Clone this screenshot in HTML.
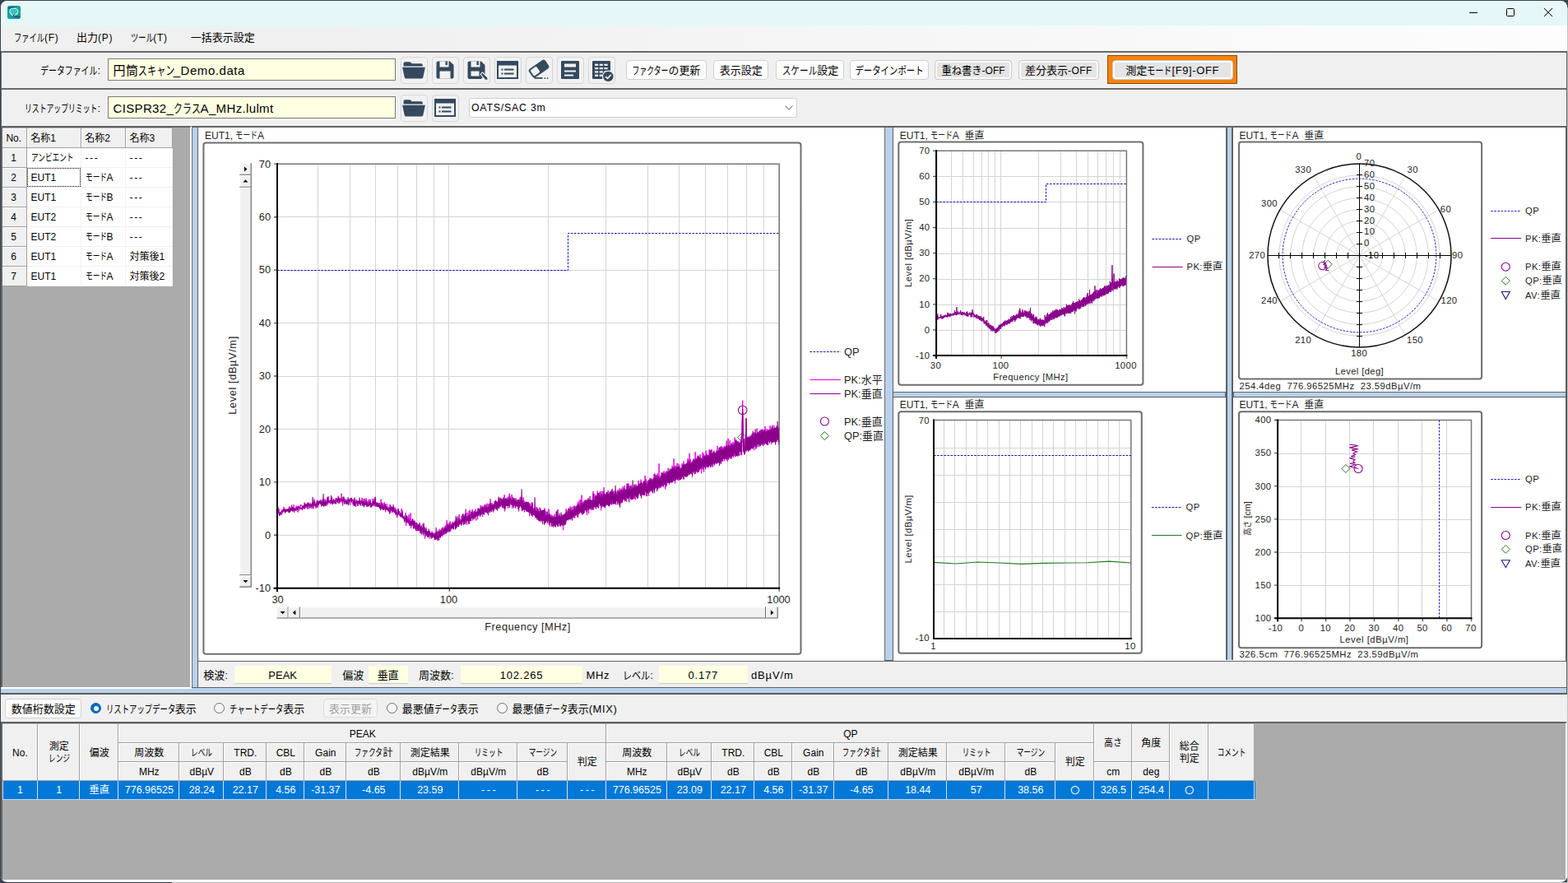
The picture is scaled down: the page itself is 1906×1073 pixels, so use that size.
<!DOCTYPE html><html lang="ja"><head><meta charset="utf-8"><title>EMI</title><style>
html,body{margin:0;padding:0}
body{width:1906px;height:1073px;overflow:hidden;position:relative;background:#3a4450;font-family:"Liberation Sans","Noto Sans CJK JP",sans-serif;font-size:12px;color:#000}
#win{position:absolute;left:0;top:0;width:1906px;height:1073px;clip-path:inset(1px 1px 1px 1px round 8px);background:#f0f0f0}
#win div{position:absolute;box-sizing:border-box}
.t{white-space:nowrap;transform:translateY(-50%);line-height:1}
.tc{white-space:nowrap;transform:translate(-50%,-50%);line-height:1}
.tr{white-space:nowrap;transform:translate(-100%,-50%);line-height:1}
.j{display:inline-block;white-space:nowrap;transform-origin:0 50%}
svg{position:absolute;left:0;top:0;overflow:visible}
.ib{border:1px solid #d6d6d6;border-radius:4px;background:#f1f1f1}
.wb{border:1px solid #d0d0d0;border-radius:4px;background:#fdfdfd}
.gb{border:1px solid #c9c9c9;border-radius:4px;background:#e4e4e4;box-shadow:inset 0 0 0 2px #fbfbfb}
.yl{background:#ffffe1}
.hc{background:#f0f0f0;border-right:1px solid #a0a0a0;border-bottom:1px solid #a0a0a0;box-shadow:inset 1px 1px 0 #fff}
.cf{font-size:12.5px}
</style></head><body><div id="win">
<div style="left:0px;top:0px;width:1906px;height:31px;background:#e6f7f8"></div>
<svg width="1906" height="32" viewBox="0 0 1906 32"><rect x="9" y="7" width="16" height="16" rx="2.5" fill="#12a295"/><path d="M16.9 19.6c-3.2-1.6-4.9-3.4-4.9-5.3 0-2.4 2.1-4.1 4.9-4.1s4.9 1.700 4.900 4.100c0 1.900-1.700 3.700-4.900 5.300z" fill="none" stroke="#b5fff5" stroke-width="1.25"/><path d="M15 11.800q-1.500 2.800 0 5.600M18.800 11.800q1.500 2.800 0 5.600M16.900 11.500v6.500" fill="none" stroke="#9df2e8" stroke-width="0.9"/><path d="M10 9.700l8.300-1.500" stroke="#2b3f95" stroke-width="2" stroke-dasharray="1.300 0.700"/><path d="M15.600 19.300l8.600 1.700" stroke="#2b3f95" stroke-width="2.600" stroke-dasharray="1.400 0.600"/><path d="M1786 15.500h10" stroke="#000" stroke-width="1"/><rect x="1831.5" y="10.500" width="9" height="9" rx="1" fill="none" stroke="#000" stroke-width="1"/><path d="M1877 10l10 10M1887 10l-10 10" stroke="#000" stroke-width="1"/></svg>
<div style="left:0px;top:31px;width:1906px;height:31px;background:linear-gradient(90deg,#f0f0f0 0%,#f0f0f0 20%,#fdfdfd 100%)"></div>
<div class="t" style="left:17px;top:44.9px;font-size:13px"><span class="j" id="j1" style="width:2.840em;transform:scaleX(0.71)">ファイル</span><span style="font-size:12px;letter-spacing:0.8px">(F)</span></div>
<div class="t" style="left:93px;top:44.9px;font-size:13px"><span class="j" id="j7" style="width:2.000em">出力</span><span style="font-size:12px;letter-spacing:0.8px">(P)</span></div>
<div class="t" style="left:158.5px;top:44.9px;font-size:13px"><span class="j" id="j2" style="width:2.130em;transform:scaleX(0.71)">ツール</span><span style="font-size:12px;letter-spacing:0.8px">(T)</span></div>
<div class="t" style="left:231.7px;top:44.9px;font-size:13px"><span class="j" id="j8" style="width:6.000em">一括表示設定</span></div>
<div style="left:1px;top:62px;width:1904px;height:46px;background:#f0f0f0;border-top:2px solid #696969;border-left:1px solid #696969;border-right:1px solid #fff"></div>
<div style="left:1px;top:107px;width:1904px;height:46px;background:#f0f0f0;border-top:2px solid #696969;border-left:1px solid #696969;border-right:1px solid #fff"></div>
<div class="tr" style="left:122px;top:85px;font-size:13px"><span class="j" id="j3" style="width:5.320em;transform:scaleX(0.76)">データファイル</span>:</div>
<div class="tr" style="left:122px;top:131px;font-size:13px"><span class="j" id="j4" style="width:6.800em;transform:scaleX(0.68)">リストアップリミット</span>:</div>
<div style="left:131px;top:71px;width:350px;height:27px;background:#ffffe1;border:1px solid #7a7a7a"></div>
<div style="left:131px;top:117px;width:350px;height:27px;background:#ffffe1;border:1px solid #7a7a7a"></div>
<div class="t" style="left:137.5px;top:84.8px;font-size:15px;letter-spacing:.55px"><span class="j" id="j9" style="width:2.000em">円筒</span><span class="j" id="j5" style="width:2.880em;transform:scaleX(0.72)">スキャン</span>_Demo.data</div>
<div class="t" style="left:137.5px;top:130.8px;font-size:15px;letter-spacing:.35px">CISPR32_<span class="j" id="j6" style="width:2.160em;transform:scaleX(0.72)">クラス</span>A_MHz.lulmt</div>
<div class="ib" style="left:486.5px;top:68.5px;width:33px;height:33px;"></div>
<div class="ib" style="left:524.5px;top:68.5px;width:33px;height:33px;"></div>
<div class="ib" style="left:562.5px;top:68.5px;width:33px;height:33px;"></div>
<div class="ib" style="left:600.5px;top:68.5px;width:33px;height:33px;"></div>
<div class="ib" style="left:638.5px;top:68.5px;width:33px;height:33px;"></div>
<div class="ib" style="left:676.5px;top:68.5px;width:33px;height:33px;"></div>
<div class="ib" style="left:714.5px;top:68.5px;width:33px;height:33px;"></div>
<div class="ib" style="left:486.5px;top:114.5px;width:33px;height:33px;"></div>
<div class="ib" style="left:524.5px;top:114.5px;width:33px;height:33px;"></div>
<svg width="1906" height="160" viewBox="0 0 1906 160"><path d="M490.5 77.0q0-1.8 1.8-1.8h6.2l2.2 2h11.3q1.8 0 1.8 1.8v1.5h-23.3z" fill="#34495e"/><path d="M489.1 81.7h27.8l-2.6 12.2q-.4 1.7-2.2 1.7h-18.2q-1.8 0-2.2-1.7z" fill="#34495e"/><path d="M530.5 76.3q0-1.8 1.8-1.8h14.6l4.6 4.6v14.6q0 1.8-1.8 1.8h-17.4q-1.8 0-1.8-1.8z" fill="#34495e"/><rect x="534.5" y="86.5" width="13" height="9" fill="#f1f1f1"/><rect x="534.5" y="74.5" width="11" height="7" fill="#f1f1f1"/><rect x="541.5" y="74.5" width="2.4" height="4.6" fill="#34495e"/><path d="M568.5 76.3q0-1.8 1.8-1.8h14.6l4.6 4.6v11l-4.5 5.8h-14.700q-1.800 0-1.800-1.800z" fill="#34495e"/><rect x="572.5" y="86.5" width="10" height="6" fill="#f1f1f1"/><rect x="572.5" y="74.5" width="11" height="7" fill="#f1f1f1"/><rect x="579.5" y="74.5" width="2.4" height="4.6" fill="#34495e"/><path d="M584.1 90.3l2.4-2.4 6.4 6.4v3h-3z" fill="#34495e" stroke="#f1f1f1" stroke-width="1.1"/><rect x="605.0" y="75.0" width="24" height="20" fill="none" stroke="#34495e" stroke-width="2"/><rect x="604.5" y="74.5" width="25" height="5" fill="#34495e"/><rect x="609.5" y="83.5" width="2" height="2" fill="#34495e"/><rect x="613.0" y="83.5" width="11.5" height="2" fill="#34495e"/><rect x="609.5" y="88.5" width="2" height="2" fill="#34495e"/><rect x="613.0" y="88.5" width="11.5" height="2" fill="#34495e"/><g transform="rotate(-35 654.5 83.5)"><rect x="643.0" y="77.5" width="24" height="12.5" rx="3" fill="#34495e"/><rect x="645.0" y="79.5" width="9" height="8.5" rx="1.5" fill="#f1f1f1"/></g><path d="M649.5 94.8h10" stroke="#34495e" stroke-width="1.8"/><path d="M661.5 95.0h1.6M664.7 95.0h1.6" stroke="#34495e" stroke-width="1.6"/><rect x="682.0" y="74.0" width="22" height="22" rx="1" fill="#34495e"/><rect x="686.0" y="77.5" width="14" height="4" fill="#f1f1f1"/><rect x="686.0" y="85.5" width="14" height="2" fill="#f1f1f1"/><rect x="686.0" y="90.5" width="11" height="2" fill="#f1f1f1"/><rect x="720.0" y="74.0" width="22" height="22" rx="1" fill="#34495e"/><rect x="723.0" y="77.7" width="4.2" height="2.2" fill="#f1f1f1"/><rect x="728.7" y="77.7" width="4.2" height="2.2" fill="#f1f1f1"/><rect x="734.4" y="77.7" width="4.2" height="2.2" fill="#f1f1f1"/><rect x="723.0" y="82.0" width="4.2" height="2.2" fill="#f1f1f1"/><rect x="728.7" y="82.0" width="4.2" height="2.2" fill="#f1f1f1"/><rect x="734.4" y="82.0" width="4.2" height="2.2" fill="#f1f1f1"/><rect x="723.0" y="86.3" width="4.2" height="2.2" fill="#f1f1f1"/><rect x="728.7" y="86.3" width="4.2" height="2.2" fill="#f1f1f1"/><rect x="734.4" y="86.3" width="4.2" height="2.2" fill="#f1f1f1"/><rect x="723.0" y="90.6" width="4.2" height="2.2" fill="#f1f1f1"/><rect x="728.7" y="90.6" width="4.2" height="2.2" fill="#f1f1f1"/><rect x="734.4" y="90.6" width="4.2" height="2.2" fill="#f1f1f1"/><circle cx="739.3" cy="92.9" r="7.4" fill="#f1f1f1"/><circle cx="739.3" cy="92.9" r="6.2" fill="#34495e"/><path d="M736.1 93.1l2.3 2.3 4.3-4.6" fill="none" stroke="#f1f1f1" stroke-width="1.7"/><path d="M490.5 123.0q0-1.8 1.8-1.8h6.2l2.2 2h11.3q1.8 0 1.8 1.8v1.5h-23.3z" fill="#34495e"/><path d="M489.1 127.7h27.8l-2.6 12.2q-.4 1.7-2.2 1.7h-18.2q-1.8 0-2.2-1.7z" fill="#34495e"/><rect x="529.0" y="121.0" width="24" height="20" fill="none" stroke="#34495e" stroke-width="2"/><rect x="528.5" y="120.5" width="25" height="5" fill="#34495e"/><rect x="533.5" y="129.5" width="2" height="2" fill="#34495e"/><rect x="537.0" y="129.5" width="11.5" height="2" fill="#34495e"/><rect x="533.5" y="134.5" width="2" height="2" fill="#34495e"/><rect x="537.0" y="134.5" width="11.5" height="2" fill="#34495e"/></svg>
<div class="wb" style="left:760.5px;top:72.5px;width:98.0px;height:24.5px;"></div>
<div class="tc" style="left:809.5px;top:85.2px;font-size:13px"><span class="j" id="j10" style="width:3.400em;transform:scaleX(0.68)">ファクター</span><span class="j" id="j14" style="width:2.970em;transform:scaleX(0.99)">の更新</span></div>
<div class="wb" style="left:867.2px;top:72.5px;width:67.1px;height:24.5px;"></div>
<div class="tc" style="left:900.75px;top:85.2px;font-size:13px"><span class="j" id="j15" style="width:4.000em">表示設定</span></div>
<div class="wb" style="left:943.4px;top:72.5px;width:82.9px;height:24.5px;"></div>
<div class="tc" style="left:984.8499999999999px;top:85.2px;font-size:13px"><span class="j" id="j11" style="width:3.280em;transform:scaleX(0.82)">スケール</span><span class="j" id="j16" style="width:2.000em">設定</span></div>
<div class="wb" style="left:1033.3px;top:72.5px;width:96.0px;height:24.5px;"></div>
<div class="tc" style="left:1081.3px;top:85.2px;font-size:13px"><span class="j" id="j12" style="width:6.400em;transform:scaleX(0.8)">データインポート</span></div>
<div class="gb" style="left:1136.4px;top:72.5px;width:93.2px;height:24.5px;"></div>
<div class="tc" style="left:1183.0px;top:85.2px;font-size:13px"><span class="j" id="j17" style="width:3.780em;transform:scaleX(0.945)">重ね書き</span><span style="font-size:12px;letter-spacing:0px">-OFF</span></div>
<div class="gb" style="left:1238.2px;top:72.5px;width:97.5px;height:24.5px;"></div>
<div class="tc" style="left:1286.95px;top:85.2px;font-size:13px"><span class="j" id="j18" style="width:4.000em">差分表示</span><span style="font-size:12px;letter-spacing:0.5px">-OFF</span></div>
<div style="left:1346px;top:67px;width:158px;height:35px;background:#f5820b;border:1px solid #8a4a10"></div>
<div class="gb" style="left:1351.5px;top:72.5px;width:147.2px;height:24.5px;"></div>
<div class="tc" style="left:1425.1px;top:85.2px;font-size:13px"><span class="j" id="j19" style="width:2.000em">測定</span><span class="j" id="j13" style="width:2.340em;transform:scaleX(0.78)">モード</span><span style="font-size:13px;letter-spacing:0.6px">[F9]-OFF</span></div>
<div style="left:569.5px;top:118.5px;width:399px;height:24.5px;background:#fff;border:1px solid #d0d0d0;border-radius:3px"></div>
<div class="t" style="left:573px;top:131.2px;font-size:12.3px;letter-spacing:.8px">OATS/SAC 3m</div>
<svg width="1906" height="160" viewBox="0 0 1906 160"><path d="M954.5 128.5l4.5 4.5 4.5-4.5" fill="none" stroke="#5c5c5c" stroke-width="1"/></svg>
<div style="left:1px;top:153px;width:1904px;height:690px;background:#f0f0f0"></div>
<div style="left:1px;top:153px;width:232px;height:683px;background:#ababab;border-top:2px solid #646464;border-left:2px solid #646464;border-right:2px solid #fff;border-bottom:1px solid #fff"></div>
<div style="left:233.3px;top:153px;width:7.3px;height:683px;background:#b9d1ea;border-left:1px solid #686d73;border-right:1.7px solid #5a5d60;border-top:2px solid #646464"></div>
<div style="left:240.6px;top:153px;width:835px;height:651.6px;background:#fff;border-top:2px solid #646464;border-bottom:2.6px solid #646464"></div>
<div style="left:1075px;top:153px;width:11px;height:651px;background:#b9d1ea;border-left:1px solid #686d73;border-right:1.9px solid #5a5d60;border-top:2px solid #646464;border-bottom:2px solid #646464"></div>
<div style="left:1086px;top:153px;width:818px;height:651.6px;background:#fff;border-top:2px solid #646464;border-bottom:2.6px solid #646464"></div>
<div style="left:1086px;top:476px;width:818px;height:6.9px;background:#b9d1ea;border-top:1.2px solid #62676d;border-bottom:1.1px solid #5a5d60"></div>
<div style="left:1489.1px;top:155px;width:10.9px;height:647px;background:#5d6166"></div>
<div style="left:1491.8px;top:155px;width:5.5px;height:647px;background:#b9d1ea"></div>
<div style="left:1489.1px;top:155px;width:1px;height:321px;background:#fff"></div>
<div style="left:1489.1px;top:482.9px;width:1px;height:320px;background:#fff"></div>
<div style="left:1498.9px;top:155px;width:1.1px;height:321px;background:#fff"></div>
<div style="left:1498.9px;top:482.9px;width:1.1px;height:320px;background:#fff"></div>
<div style="left:240.6px;top:804px;width:1663.4px;height:31px;background:#f0f0f0"></div>
<div style="left:1px;top:835.2px;width:1904px;height:8.5px;background:#b9d1ea;border-top:1.8px solid #5f6367;border-bottom:2px solid #5a5d60"></div>
<div style="left:1px;top:834.7px;width:232.3px;height:2.1px;background:#fff"></div>
<div style="left:1904.3px;top:62px;width:1.3px;height:815px;background:#5c5c5c"></div>
<div style="left:1903px;top:153px;width:1.4px;height:651px;background:#5c5c5c"></div>
<div style="left:2.6px;top:155.5px;width:207.6px;height:192px;background:#fff"></div>
<div class="hc" style="left:2.6px;top:155.5px;width:30.3px;height:24.2px;"></div>
<div class="t" style="left:7.4px;top:167.7px;">No.</div>
<div class="hc" style="left:32.9px;top:155.5px;width:66.0px;height:24.2px;"></div>
<div class="t" style="left:37.3px;top:167.7px;"><span class="j" id="j27" style="width:2.000em">名称</span>1</div>
<div class="hc" style="left:98.9px;top:155.5px;width:54.1px;height:24.2px;"></div>
<div class="t" style="left:103.30000000000001px;top:167.7px;"><span class="j" id="j28" style="width:2.000em">名称</span>2</div>
<div class="hc" style="left:153px;top:155.5px;width:57.2px;height:24.2px;"></div>
<div class="t" style="left:157.4px;top:167.7px;"><span class="j" id="j29" style="width:2.000em">名称</span>3</div>
<div class="hc" style="left:2.6px;top:179.5px;width:30.3px;height:24px;"></div>
<div class="tc" style="left:16.6px;top:191.5px;">1</div>
<div style="left:32.9px;top:179.5px;width:66.0px;height:24px;border-right:1px solid #f1f1f1;border-bottom:1px solid #f1f1f1"></div>
<div class="t" style="left:37.5px;top:191.5px;"><span class="j" id="j20" style="width:4.320em;transform:scaleX(0.72)">アンビエント</span></div>
<div style="left:98.9px;top:179.5px;width:54.1px;height:24px;border-right:1px solid #f1f1f1;border-bottom:1px solid #f1f1f1"></div>
<div class="t" style="left:103.5px;top:191.5px;letter-spacing:1.6px">---</div>
<div style="left:153px;top:179.5px;width:57.2px;height:24px;border-right:1px solid #f1f1f1;border-bottom:1px solid #f1f1f1"></div>
<div class="t" style="left:157.6px;top:191.5px;letter-spacing:1.6px">---</div>
<div class="hc" style="left:2.6px;top:203.5px;width:30.3px;height:24px;"></div>
<div class="tc" style="left:16.6px;top:215.5px;">2</div>
<div style="left:32.9px;top:203.5px;width:66.0px;height:24px;border-right:1px solid #f1f1f1;border-bottom:1px solid #f1f1f1"></div>
<div class="t" style="left:37.5px;top:215.5px;">EUT1</div>
<div style="left:98.9px;top:203.5px;width:54.1px;height:24px;border-right:1px solid #f1f1f1;border-bottom:1px solid #f1f1f1"></div>
<div class="t" style="left:103.5px;top:215.5px;"><span class="j" id="j21" style="width:2.160em;transform:scaleX(0.72)">モード</span>A</div>
<div style="left:153px;top:203.5px;width:57.2px;height:24px;border-right:1px solid #f1f1f1;border-bottom:1px solid #f1f1f1"></div>
<div class="t" style="left:157.6px;top:215.5px;letter-spacing:1.6px">---</div>
<div class="hc" style="left:2.6px;top:227.5px;width:30.3px;height:24px;"></div>
<div class="tc" style="left:16.6px;top:239.5px;">3</div>
<div style="left:32.9px;top:227.5px;width:66.0px;height:24px;border-right:1px solid #f1f1f1;border-bottom:1px solid #f1f1f1"></div>
<div class="t" style="left:37.5px;top:239.5px;">EUT1</div>
<div style="left:98.9px;top:227.5px;width:54.1px;height:24px;border-right:1px solid #f1f1f1;border-bottom:1px solid #f1f1f1"></div>
<div class="t" style="left:103.5px;top:239.5px;"><span class="j" id="j22" style="width:2.160em;transform:scaleX(0.72)">モード</span>B</div>
<div style="left:153px;top:227.5px;width:57.2px;height:24px;border-right:1px solid #f1f1f1;border-bottom:1px solid #f1f1f1"></div>
<div class="t" style="left:157.6px;top:239.5px;letter-spacing:1.6px">---</div>
<div class="hc" style="left:2.6px;top:251.5px;width:30.3px;height:24px;"></div>
<div class="tc" style="left:16.6px;top:263.5px;">4</div>
<div style="left:32.9px;top:251.5px;width:66.0px;height:24px;border-right:1px solid #f1f1f1;border-bottom:1px solid #f1f1f1"></div>
<div class="t" style="left:37.5px;top:263.5px;">EUT2</div>
<div style="left:98.9px;top:251.5px;width:54.1px;height:24px;border-right:1px solid #f1f1f1;border-bottom:1px solid #f1f1f1"></div>
<div class="t" style="left:103.5px;top:263.5px;"><span class="j" id="j23" style="width:2.160em;transform:scaleX(0.72)">モード</span>A</div>
<div style="left:153px;top:251.5px;width:57.2px;height:24px;border-right:1px solid #f1f1f1;border-bottom:1px solid #f1f1f1"></div>
<div class="t" style="left:157.6px;top:263.5px;letter-spacing:1.6px">---</div>
<div class="hc" style="left:2.6px;top:275.5px;width:30.3px;height:24px;"></div>
<div class="tc" style="left:16.6px;top:287.5px;">5</div>
<div style="left:32.9px;top:275.5px;width:66.0px;height:24px;border-right:1px solid #f1f1f1;border-bottom:1px solid #f1f1f1"></div>
<div class="t" style="left:37.5px;top:287.5px;">EUT2</div>
<div style="left:98.9px;top:275.5px;width:54.1px;height:24px;border-right:1px solid #f1f1f1;border-bottom:1px solid #f1f1f1"></div>
<div class="t" style="left:103.5px;top:287.5px;"><span class="j" id="j24" style="width:2.160em;transform:scaleX(0.72)">モード</span>B</div>
<div style="left:153px;top:275.5px;width:57.2px;height:24px;border-right:1px solid #f1f1f1;border-bottom:1px solid #f1f1f1"></div>
<div class="t" style="left:157.6px;top:287.5px;letter-spacing:1.6px">---</div>
<div class="hc" style="left:2.6px;top:299.5px;width:30.3px;height:24px;"></div>
<div class="tc" style="left:16.6px;top:311.5px;">6</div>
<div style="left:32.9px;top:299.5px;width:66.0px;height:24px;border-right:1px solid #f1f1f1;border-bottom:1px solid #f1f1f1"></div>
<div class="t" style="left:37.5px;top:311.5px;">EUT1</div>
<div style="left:98.9px;top:299.5px;width:54.1px;height:24px;border-right:1px solid #f1f1f1;border-bottom:1px solid #f1f1f1"></div>
<div class="t" style="left:103.5px;top:311.5px;"><span class="j" id="j25" style="width:2.160em;transform:scaleX(0.72)">モード</span>A</div>
<div style="left:153px;top:299.5px;width:57.2px;height:24px;border-right:1px solid #f1f1f1;border-bottom:1px solid #f1f1f1"></div>
<div class="t" style="left:157.6px;top:311.5px;"><span class="j" id="j30" style="width:3.000em">対策後</span>1</div>
<div class="hc" style="left:2.6px;top:323.5px;width:30.3px;height:24px;"></div>
<div class="tc" style="left:16.6px;top:335.5px;">7</div>
<div style="left:32.9px;top:323.5px;width:66.0px;height:24px;border-right:1px solid #f1f1f1;border-bottom:1px solid #f1f1f1"></div>
<div class="t" style="left:37.5px;top:335.5px;">EUT1</div>
<div style="left:98.9px;top:323.5px;width:54.1px;height:24px;border-right:1px solid #f1f1f1;border-bottom:1px solid #f1f1f1"></div>
<div class="t" style="left:103.5px;top:335.5px;"><span class="j" id="j26" style="width:2.160em;transform:scaleX(0.72)">モード</span>A</div>
<div style="left:153px;top:323.5px;width:57.2px;height:24px;border-right:1px solid #f1f1f1;border-bottom:1px solid #f1f1f1"></div>
<div class="t" style="left:157.6px;top:335.5px;"><span class="j" id="j31" style="width:3.000em">対策後</span>2</div>
<div style="left:32.9px;top:203.6px;width:65.5px;height:23.3px;border:1px dotted #000"></div>
<svg width="1906" height="1073" viewBox="0 0 1906 1073" font-family='"Liberation Sans", "Noto Sans CJK JP", sans-serif' fill="#1e1e1e"><rect x="247.4" y="173.5" width="726.1" height="621.3" rx="3" fill="#fff" stroke="#6e6e6e" stroke-width="2"/><path d="M386.5 199.3V714.7M425.5 199.3V714.7M456.5 199.3V714.7M483.5 199.3V714.7M506.5 199.3V714.7M527.5 199.3V714.7M545.5 199.3V714.7M666.5 199.3V714.7M736.5 199.3V714.7M787.5 199.3V714.7M825.5 199.3V714.7M857.5 199.3V714.7M884.5 199.3V714.7M907.5 199.3V714.7M928.5 199.3V714.7M337.0 650.5H947.2M337.0 585.5H947.2M337.0 521.5H947.2M337.0 457.5H947.2M337.0 392.5H947.2M337.0 328.5H947.2M337.0 263.5H947.2" stroke="#d4d4d4" stroke-width="1" fill="none"/><path d="M333.0 199.3H947.2V718.7" stroke="#787878" stroke-width="1.6" fill="none"/><path d="M333.0 714.7H337.0M333.0 650.3H337.0M333.0 585.9H337.0M333.0 521.4H337.0M333.0 457.0H337.0M333.0 392.6H337.0M333.0 328.1H337.0M333.0 263.7H337.0M336.7 714.7V718.7M546.3 714.7V718.7" stroke="#555" stroke-width="1.4" fill="none"/><path d="M337.0 328.5H690.5V283.5H947.2" stroke="#1212a8" stroke-width="1" stroke-dasharray="2.6 1.5" fill="none"/><path d="M896.7 531.5l5.5-5.5 5.5 5.5-5.5 5.5z" fill="none" stroke="#1e7a1e" stroke-width="1"/><polyline points="336.1,628.2 336.6,625.1 337.1,623.2 337.6,623.2 338.1,616.3 338.6,620.9 339.1,618.3 339.6,624.5 340.1,621.8 340.6,623.6 341.1,624.4 341.6,622.6 342.1,623.9 342.6,625.6 343.1,619.0 343.6,620.5 344.1,622.2 344.6,620.8 345.1,615.9 345.6,621.1 346.1,619.7 346.6,621.1 347.1,622.1 347.6,619.9 348.1,619.4 348.6,621.6 349.1,618.7 349.6,621.3 350.1,618.4 350.6,621.0 351.1,623.2 351.6,619.6 352.1,615.3 352.6,616.6 353.1,621.1 353.6,619.8 354.1,617.8 354.6,620.0 355.1,617.1 355.6,621.7 356.1,616.2 356.6,620.6 357.1,613.3 357.6,623.0 358.1,618.0 358.6,617.9 359.1,618.4 359.6,618.1 360.1,614.7 360.6,620.3 361.1,620.0 361.6,616.4 362.1,622.5 362.6,618.3 363.1,618.0 363.6,620.4 364.1,614.5 364.6,617.6 365.1,616.4 365.6,612.9 366.1,614.6 366.6,614.4 367.1,614.7 367.6,619.8 368.1,614.3 368.6,616.7 369.1,614.8 369.6,614.0 370.1,616.1 370.6,613.9 371.1,611.7 371.6,614.7 372.1,617.4 372.6,616.1 373.1,613.0 373.6,614.2 374.1,617.6 374.6,618.8 375.1,614.4 375.6,613.7 376.1,612.6 376.6,614.3 377.1,616.9 377.6,614.4 378.1,615.4 378.6,618.0 379.1,617.6 379.6,612.9 380.1,614.0 380.6,615.3 381.1,612.8 381.6,613.9 382.1,606.6 382.6,608.7 383.1,611.1 383.6,614.0 384.1,617.8 384.6,611.0 385.1,611.5 385.6,616.2 386.1,608.8 386.6,616.9 387.1,608.9 387.6,611.0 388.1,610.9 388.6,608.8 389.1,610.4 389.6,612.8 390.1,609.1 390.6,615.3 391.1,614.4 391.6,609.6 392.1,612.2 392.6,612.9 393.1,610.1 393.6,610.2 394.1,612.0 394.6,610.4 395.1,606.3 395.6,611.5 396.1,609.3 396.6,609.3 397.1,607.5 397.6,610.8 398.1,604.2 398.6,612.9 399.1,603.3 399.6,611.0 400.1,608.6 400.6,609.1 401.1,609.3 401.6,612.5 402.1,608.1 402.6,610.8 403.1,603.7 403.6,609.0 404.1,612.4 404.6,609.4 405.1,611.6 405.6,606.0 406.1,612.0 406.6,609.3 407.1,608.8 407.6,610.6 408.1,605.2 408.6,608.1 409.1,608.7 409.6,610.2 410.1,605.4 410.6,610.3 411.1,611.5 411.6,611.4 412.1,608.9 412.6,607.7 413.1,605.4 413.6,609.6 414.1,605.3 414.6,610.2 415.1,599.8 415.6,609.4 416.1,608.0 416.6,614.6 417.1,605.3 417.6,606.2 418.1,607.4 418.6,612.2 419.1,606.2 419.6,608.7 420.1,610.8 420.6,611.8 421.1,607.0 421.6,609.6 422.1,607.3 422.6,608.8 423.1,611.3 423.6,611.6 424.1,605.7 424.6,609.0 425.1,606.6 425.6,613.5 426.1,608.8 426.6,608.3 427.1,605.0 427.6,610.7 428.1,610.7 428.6,612.2 429.1,612.8 429.6,614.1 430.1,606.0 430.6,611.6 431.1,608.9 431.6,614.7 432.1,609.9 432.6,616.0 433.1,606.9 433.6,609.2 434.1,610.5 434.6,614.0 435.1,614.1 435.6,614.3 436.1,611.7 436.6,609.0 437.1,612.9 437.6,613.0 438.1,607.8 438.6,612.6 439.1,609.4 439.6,610.4 440.1,610.2 440.6,611.6 441.1,609.1 441.6,615.3 442.1,606.0 442.6,611.9 443.1,606.0 443.6,609.2 444.1,610.8 444.6,612.5 445.1,605.3 445.6,611.6 446.1,609.0 446.6,616.0 447.1,610.2 447.6,613.2 448.1,607.0 448.6,613.3 449.1,610.8 449.6,614.3 450.1,606.4 450.6,614.9 451.1,612.1 451.6,611.3 452.1,613.0 452.6,614.1 453.1,605.9 453.6,614.8 454.1,608.7 454.6,614.2 455.1,605.9 455.6,615.4 456.1,603.8 456.6,612.0 457.1,610.5 457.6,615.4 458.1,612.6 458.6,615.2 459.1,612.6 459.6,615.3 460.1,612.8 460.6,616.3 461.1,611.1 461.6,615.7 462.1,613.5 462.6,619.1 463.1,606.6 463.6,616.5 464.1,613.2 464.6,618.0 465.1,611.5 465.6,614.9 466.1,618.0 466.6,620.1 467.1,610.2 467.6,618.5 468.1,612.7 468.6,622.2 469.1,615.4 469.6,617.7 470.1,612.3 470.6,618.2 471.1,616.8 471.6,621.2 472.1,615.7 472.6,617.2 473.1,617.7 473.6,624.8 474.1,612.9 474.6,621.0 475.1,617.2 475.6,620.2 476.1,616.4 476.6,623.1 477.1,615.6 477.6,620.2 478.1,622.7 478.6,622.0 479.1,617.7 479.6,621.8 480.1,616.4 480.6,623.5 481.1,622.1 481.6,623.8 482.1,624.9 482.6,629.2 483.1,619.2 483.6,625.1 484.1,619.3 484.6,625.2 485.1,624.2 485.6,626.6 486.1,623.2 486.6,627.5 487.1,625.0 487.6,627.1 488.1,618.1 488.6,626.1 489.1,620.4 489.6,628.5 490.1,627.7 490.6,628.3 491.1,629.5 491.6,629.7 492.1,632.8 492.6,631.8 493.1,629.7 493.6,638.8 494.1,626.5 494.6,631.2 495.1,627.2 495.6,635.1 496.1,629.7 496.6,636.2 497.1,625.3 497.6,636.7 498.1,630.1 498.6,638.6 499.1,623.5 499.6,642.1 500.1,633.5 500.6,639.7 501.1,635.6 501.6,635.2 502.1,634.5 502.6,641.1 503.1,634.5 503.6,641.8 504.1,632.7 504.6,642.7 505.1,638.7 505.6,643.5 506.1,635.0 506.6,645.3 507.1,635.7 507.6,643.1 508.1,637.0 508.6,643.3 509.1,641.1 509.6,644.8 510.1,637.1 510.6,643.3 511.1,643.0 511.6,648.5 512.1,638.5 512.6,649.5 513.1,648.3 513.6,647.7 514.1,636.6 514.6,650.6 515.1,643.0 515.6,644.3 516.1,640.6 516.6,654.5 517.1,645.6 517.6,647.3 518.1,643.1 518.6,650.5 519.1,646.5 519.6,652.9 520.1,645.6 520.6,650.7 521.1,646.4 521.6,652.1 522.1,645.7 522.6,655.1 523.1,647.1 523.6,650.0 524.1,647.2 524.6,652.0 525.1,645.5 525.6,652.4 526.1,647.5 526.6,653.0 527.1,648.8 527.6,652.6 528.1,647.8 528.6,655.3 529.1,648.8 529.6,654.6 530.1,649.9 530.6,655.1 531.1,646.0 531.6,656.6 532.1,644.6 532.6,656.6 533.1,651.8 533.6,655.9 534.1,647.4 534.6,653.0 535.1,646.5 535.6,653.3 536.1,644.0 536.6,649.9 537.1,641.6 537.6,651.9 538.1,644.7 538.6,649.4 539.1,643.1 539.6,649.6 540.1,641.8 540.6,649.3 541.1,639.3 541.6,645.7 542.1,637.7 542.6,646.1 543.1,632.2 543.6,646.6 544.1,640.0 544.6,645.9 545.1,639.5 545.6,646.8 546.1,637.5 546.6,642.3 547.1,633.5 547.6,645.9 548.1,635.8 548.6,643.6 549.1,637.2 549.6,640.3 550.1,636.2 550.6,642.0 551.1,635.1 551.6,639.2 552.1,635.2 552.6,638.2 553.1,632.7 553.6,639.5 554.1,634.7 554.6,642.0 555.1,629.7 555.6,637.2 556.1,627.6 556.6,639.7 557.1,629.8 557.6,637.3 558.1,632.3 558.6,637.9 559.1,630.7 559.6,637.0 560.1,634.1 560.6,638.9 561.1,632.2 561.6,637.1 562.1,625.0 562.6,633.7 563.1,630.6 563.6,637.7 564.1,627.5 564.6,636.7 565.1,627.0 565.6,633.7 566.1,624.9 566.6,635.2 567.1,627.4 567.6,637.6 568.1,623.0 568.6,632.2 569.1,628.9 569.6,633.1 570.1,620.9 570.6,636.6 571.1,619.7 571.6,632.6 572.1,624.4 572.6,628.2 573.1,621.8 573.6,629.9 574.1,622.5 574.6,632.4 575.1,626.0 575.6,629.1 576.1,622.6 576.6,630.3 577.1,620.9 577.6,628.7 578.1,618.6 578.6,632.5 579.1,622.8 579.6,623.9 580.1,623.3 580.6,631.3 581.1,617.6 581.6,626.7 582.1,619.9 582.6,626.2 583.1,617.9 583.6,626.3 584.1,613.9 584.6,622.1 585.1,620.6 585.6,624.6 586.1,621.5 586.6,628.1 587.1,617.3 587.6,624.4 588.1,616.0 588.6,625.5 589.1,613.1 589.6,621.7 590.1,613.0 590.6,622.9 591.1,614.0 591.6,622.3 592.1,611.8 592.6,621.9 593.1,615.8 593.6,626.3 594.1,615.5 594.6,622.5 595.1,612.0 595.6,622.8 596.1,606.4 596.6,621.1 597.1,615.2 597.6,619.7 598.1,610.9 598.6,619.4 599.1,614.7 599.6,622.6 600.1,614.9 600.6,618.7 601.1,612.0 601.6,615.6 602.1,613.1 602.6,618.8 603.1,609.1 603.6,619.2 604.1,609.2 604.6,616.2 605.1,610.0 605.6,615.1 606.1,606.3 606.6,617.9 607.1,608.6 607.6,615.9 608.1,604.6 608.6,614.0 609.1,606.9 609.6,614.0 610.1,606.1 610.6,615.8 611.1,611.8 611.6,617.4 612.1,604.9 612.6,618.0 613.1,601.2 613.6,621.4 614.1,607.6 614.6,618.2 615.1,605.7 615.6,614.3 616.1,610.3 616.6,612.0 617.1,606.2 617.6,612.4 618.1,603.6 618.6,614.8 619.1,599.7 619.6,615.0 620.1,606.6 620.6,612.3 621.1,608.7 621.6,612.1 622.1,600.9 622.6,617.9 623.1,603.9 623.6,615.5 624.1,606.4 624.6,614.7 625.1,605.6 625.6,614.3 626.1,608.2 626.6,617.5 627.1,605.2 627.6,612.8 628.1,610.2 628.6,615.4 629.1,607.2 629.6,618.7 630.1,611.1 630.6,621.3 631.1,608.2 631.6,611.4 632.1,604.5 632.6,615.1 633.1,603.7 633.6,615.6 634.1,604.3 634.6,621.1 635.1,607.8 635.6,618.7 636.1,604.4 636.6,618.3 637.1,608.6 637.6,622.4 638.1,612.8 638.6,618.0 639.1,609.8 639.6,619.6 640.1,609.8 640.6,622.0 641.1,614.9 641.6,621.9 642.1,611.2 642.6,622.5 643.1,610.9 643.6,627.2 644.1,612.1 644.6,623.4 645.1,615.5 645.6,621.9 646.1,610.5 646.6,627.2 647.1,610.5 647.6,628.1 648.1,617.6 648.6,626.0 649.1,617.0 649.6,625.9 650.1,618.2 650.6,629.3 651.1,623.5 651.6,628.7 652.1,616.0 652.6,628.3 653.1,617.2 653.6,631.8 654.1,618.5 654.6,631.6 655.1,623.4 655.6,632.0 656.1,616.7 656.6,632.9 657.1,622.9 657.6,634.4 658.1,621.6 658.6,632.9 659.1,626.1 659.6,629.6 660.1,622.0 660.6,632.7 661.1,621.2 661.6,637.7 662.1,617.5 662.6,635.8 663.1,621.3 663.6,633.5 664.1,627.3 664.6,633.5 665.1,622.1 665.6,634.4 666.1,624.4 666.6,633.0 667.1,618.5 667.6,636.7 668.1,623.9 668.6,639.8 669.1,628.0 669.6,633.6 670.1,625.3 670.6,639.5 671.1,632.0 671.6,639.4 672.1,626.7 672.6,637.2 673.1,627.8 673.6,639.0 674.1,628.0 674.6,636.3 675.1,628.0 675.6,638.1 676.1,631.9 676.6,637.9 677.1,628.7 677.6,639.7 678.1,618.9 678.6,639.1 679.1,628.7 679.6,633.8 680.1,629.8 680.6,639.2 681.1,627.3 681.6,636.8 682.1,629.8 682.6,636.1 683.1,629.3 683.6,639.1 684.1,627.9 684.6,644.2 685.1,625.1 685.6,637.6 686.1,627.8 686.6,635.8 687.1,625.0 687.6,635.9 688.1,622.4 688.6,633.5 689.1,620.0 689.6,632.0 690.1,622.3 690.6,630.8 691.1,618.0 691.6,631.2 692.1,618.7 692.6,629.4 693.1,619.6 693.6,627.9 694.1,617.7 694.6,630.3 695.1,616.2 695.6,626.0 696.1,619.5 696.6,628.7 697.1,615.1 697.6,627.0 698.1,614.5 698.6,629.8 699.1,621.1 699.6,627.2 700.1,615.2 700.6,625.7 701.1,614.2 701.6,628.0 702.1,614.5 702.6,624.3 703.1,609.4 703.6,624.7 704.1,611.8 704.6,623.3 705.1,607.1 705.6,622.4 706.1,607.2 706.6,624.1 707.1,601.6 707.6,625.8 708.1,610.9 708.6,621.0 709.1,609.4 709.6,621.1 710.1,608.4 710.6,623.0 711.1,608.1 711.6,619.7 712.1,609.8 712.6,621.9 713.1,612.1 713.6,625.8 714.1,606.6 714.6,619.6 715.1,605.3 715.6,624.1 716.1,611.6 716.6,618.6 717.1,607.5 717.6,618.5 718.1,608.5 718.6,619.6 719.1,608.4 719.6,619.3 720.1,609.7 720.6,618.0 721.1,596.9 721.6,619.6 722.1,600.0 722.6,615.1 723.1,603.0 723.6,617.2 724.1,601.3 724.6,618.7 725.1,604.3 725.6,615.9 726.1,607.4 726.6,615.2 727.1,605.9 727.6,614.3 728.1,602.2 728.6,612.2 729.1,597.5 729.6,614.9 730.1,597.2 730.6,620.2 731.1,601.1 731.6,616.5 732.1,596.7 732.6,614.5 733.1,602.6 733.6,614.8 734.1,597.0 734.6,612.0 735.1,604.4 735.6,617.1 736.1,602.4 736.6,612.2 737.1,599.3 737.6,613.9 738.1,598.2 738.6,613.5 739.1,595.8 739.6,609.9 740.1,602.0 740.6,611.3 741.1,598.6 741.6,613.4 742.1,601.2 742.6,612.2 743.1,598.8 743.6,613.8 744.1,599.8 744.6,612.3 745.1,596.3 745.6,609.0 746.1,598.9 746.6,610.3 747.1,599.3 747.6,609.8 748.1,597.6 748.6,608.6 749.1,598.4 749.6,607.5 750.1,596.7 750.6,613.4 751.1,599.8 751.6,611.3 752.1,598.4 752.6,608.6 753.1,596.4 753.6,613.2 754.1,596.4 754.6,609.7 755.1,595.0 755.6,611.2 756.1,598.8 756.6,610.8 757.1,591.4 757.6,607.6 758.1,592.9 758.6,606.6 759.1,590.0 759.6,608.1 760.1,594.7 760.6,608.6 761.1,597.4 761.6,609.7 762.1,587.4 762.6,606.3 763.1,592.2 763.6,605.2 764.1,587.6 764.6,609.5 765.1,594.2 765.6,604.3 766.1,590.0 766.6,604.4 767.1,591.4 767.6,601.2 768.1,594.0 768.6,604.6 769.1,592.2 769.6,604.0 770.1,594.3 770.6,605.6 771.1,589.2 771.6,606.3 772.1,593.0 772.6,607.2 773.1,588.5 773.6,602.1 774.1,590.3 774.6,604.2 775.1,589.9 775.6,600.4 776.1,583.9 776.6,601.4 777.1,588.0 777.6,598.8 778.1,587.1 778.6,603.0 779.1,582.7 779.6,602.8 780.1,588.0 780.6,601.2 781.1,587.7 781.6,601.2 782.1,587.2 782.6,601.4 783.1,588.9 783.6,600.1 784.1,578.0 784.6,594.4 785.1,584.9 785.6,599.0 786.1,587.7 786.6,603.0 787.1,584.3 787.6,598.7 788.1,583.5 788.6,602.4 789.1,582.9 789.6,598.1 790.1,580.8 790.6,595.8 791.1,581.4 791.6,596.6 792.1,582.0 792.6,595.9 793.1,583.6 793.6,599.5 794.1,582.9 794.6,595.7 795.1,575.8 795.6,592.9 796.1,577.1 796.6,593.7 797.1,581.8 797.6,592.0 798.1,578.0 798.6,593.4 799.1,575.3 799.6,594.8 800.1,579.5 800.6,593.0 801.1,563.4 801.6,593.4 802.1,579.7 802.6,592.5 803.1,577.9 803.6,592.3 804.1,579.3 804.6,587.7 805.1,578.5 805.6,591.0 806.1,573.7 806.6,589.0 807.1,572.4 807.6,588.5 808.1,575.1 808.6,594.4 809.1,573.4 809.6,588.7 810.1,572.3 810.6,590.1 811.1,577.0 811.6,586.2 812.1,573.7 812.6,585.9 813.1,573.8 813.6,589.1 814.1,569.7 814.6,585.3 815.1,570.0 815.6,586.0 816.1,570.0 816.6,586.3 817.1,570.9 817.6,585.1 818.1,572.8 818.6,584.9 819.1,557.4 819.6,584.3 820.1,566.7 820.6,587.5 821.1,565.7 821.6,582.6 822.1,568.3 822.6,582.2 823.1,562.8 823.6,583.3 824.1,572.4 824.6,583.8 825.1,563.6 825.6,583.8 826.1,566.2 826.6,579.6 827.1,568.7 827.6,581.9 828.1,568.2 828.6,581.7 829.1,570.2 829.6,579.5 830.1,566.5 830.6,579.2 831.1,560.4 831.6,582.2 832.1,564.9 832.6,578.3 833.1,563.9 833.6,577.6 834.1,563.8 834.6,579.6 835.1,562.0 835.6,578.8 836.1,557.2 836.6,574.3 837.1,559.4 837.6,576.3 838.1,550.9 838.6,576.5 839.1,562.9 839.6,574.5 840.1,561.8 840.6,574.2 841.1,562.3 841.6,579.9 842.1,559.5 842.6,572.9 843.1,558.2 843.6,575.1 844.1,558.9 844.6,576.2 845.1,549.2 845.6,571.5 846.1,557.4 846.6,571.8 847.1,559.5 847.6,574.5 848.1,554.8 848.6,573.8 849.1,553.8 849.6,571.2 850.1,557.9 850.6,571.3 851.1,552.1 851.6,569.7 852.1,556.1 852.6,575.3 853.1,556.4 853.6,569.4 854.1,549.5 854.6,570.8 855.1,551.3 855.6,573.5 856.1,553.6 856.6,568.1 857.1,555.0 857.6,569.5 858.1,547.6 858.6,568.0 859.1,551.4 859.6,564.6 860.1,553.1 860.6,568.3 861.1,553.6 861.6,566.6 862.1,546.1 862.6,565.3 863.1,547.5 863.6,565.8 864.1,550.9 864.6,566.5 865.1,546.0 865.6,567.4 866.1,551.3 866.6,567.2 867.1,549.4 867.6,563.8 868.1,550.1 868.6,561.8 869.1,550.5 869.6,562.1 870.1,550.2 870.6,562.2 871.1,547.3 871.6,562.9 872.1,541.9 872.6,561.8 873.1,547.2 873.6,560.9 874.1,547.5 874.6,562.5 875.1,545.9 875.6,561.8 876.1,542.8 876.6,563.7 877.1,542.0 877.6,560.8 878.1,543.3 878.6,560.6 879.1,544.9 879.6,557.5 880.1,544.5 880.6,560.2 881.1,542.9 881.6,558.0 882.1,545.2 882.6,558.2 883.1,545.7 883.6,559.3 884.1,541.4 884.6,560.7 885.1,532.9 885.6,557.8 886.1,540.7 886.6,553.1 887.1,535.1 887.6,557.1 888.1,543.1 888.6,557.8 889.1,539.7 889.6,556.7 890.1,540.2 890.6,553.5 891.1,537.1 891.6,555.8 892.1,539.0 892.6,553.7 893.1,531.7 893.6,555.2 894.1,538.2 894.6,552.1 895.1,538.7 895.6,552.6 896.1,536.8 896.6,555.0 897.1,537.8 897.6,553.3 898.1,537.5 898.6,550.2 899.1,538.1 899.6,548.5 900.1,536.1 900.6,552.9 901.1,530.3 901.6,552.9 902.1,512.5 902.6,492.2 902.7,486.6 903.1,508.1 903.6,547.6 904.1,533.0 904.6,551.0 905.1,550.5 905.6,550.4 906.1,534.8 906.6,548.0 907.1,508.5 907.6,548.4 908.1,530.9 908.6,544.2 909.1,530.7 909.6,547.2 910.1,533.4 910.6,546.2 911.1,530.8 911.6,543.8 912.1,529.2 912.6,546.2 913.1,531.4 913.6,544.0 914.1,528.7 914.6,545.1 915.1,528.1 915.6,545.0 916.1,525.5 916.6,547.1 917.1,526.3 917.6,542.7 918.1,521.6 918.6,546.0 919.1,527.8 919.6,544.5 920.1,527.4 920.6,541.6 921.1,525.3 921.6,539.9 922.1,528.7 922.6,542.3 923.1,523.7 923.6,541.3 924.1,523.0 924.6,541.0 925.1,522.2 925.6,539.3 926.1,522.6 926.6,540.5 927.1,521.9 927.6,542.1 928.1,522.7 928.6,540.3 929.1,522.8 929.6,540.3 930.1,518.0 930.6,538.6 931.1,525.0 931.6,536.9 932.1,521.4 932.6,539.2 933.1,522.4 933.6,540.6 934.1,524.5 934.6,536.7 935.1,522.1 935.6,537.7 936.1,517.2 936.6,537.0 937.1,521.6 937.6,539.8 938.1,518.4 938.6,534.9 939.1,516.6 939.6,537.2 940.1,520.1 940.6,536.8 941.1,521.5 941.6,535.8 942.1,522.4 942.6,536.7 943.1,520.7 943.6,534.9 944.1,521.4 944.6,536.8 945.1,517.3 945.6,535.2 946.1,520.5 946.6,540.3" stroke="#e100e1" stroke-width="1" fill="none" stroke-linejoin="round"/><polyline points="336.1,619.0 336.6,624.5 337.1,622.0 337.6,621.9 338.1,619.9 338.6,622.9 339.1,624.6 339.6,626.6 340.1,626.3 340.6,623.2 341.1,623.7 341.6,625.0 342.1,620.9 342.6,621.4 343.1,621.3 343.6,622.8 344.1,620.2 344.6,619.4 345.1,621.1 345.6,618.4 346.1,620.3 346.6,623.5 347.1,618.2 347.6,621.6 348.1,621.7 348.6,619.5 349.1,618.9 349.6,620.8 350.1,619.5 350.6,621.7 351.1,616.8 351.6,622.4 352.1,618.2 352.6,622.3 353.1,617.5 353.6,620.7 354.1,619.3 354.6,613.7 355.1,620.1 355.6,616.8 356.1,617.9 356.6,620.6 357.1,617.9 357.6,621.4 358.1,617.7 358.6,618.9 359.1,619.7 359.6,620.4 360.1,616.5 360.6,616.4 361.1,616.8 361.6,619.5 362.1,615.4 362.6,615.4 363.1,617.3 363.6,616.7 364.1,616.6 364.6,617.8 365.1,618.7 365.6,617.5 366.1,617.5 366.6,617.4 367.1,619.4 367.6,617.0 368.1,615.2 368.6,617.2 369.1,618.1 369.6,615.1 370.1,610.8 370.6,618.1 371.1,613.3 371.6,614.9 372.1,613.1 372.6,615.2 373.1,613.1 373.6,611.2 374.1,617.9 374.6,613.4 375.1,610.5 375.6,614.4 376.1,614.7 376.6,617.5 377.1,611.5 377.6,613.5 378.1,613.4 378.6,615.5 379.1,611.7 379.6,614.2 380.1,604.2 380.6,618.2 381.1,615.6 381.6,609.1 382.1,609.6 382.6,613.9 383.1,614.9 383.6,614.6 384.1,612.9 384.6,616.5 385.1,609.2 385.6,608.0 386.1,612.3 386.6,613.8 387.1,610.0 387.6,613.4 388.1,608.7 388.6,611.5 389.1,608.4 389.6,612.1 390.1,607.6 390.6,614.6 391.1,614.2 391.6,613.3 392.1,607.1 392.6,614.1 393.1,600.2 393.6,615.2 394.1,612.3 394.6,609.4 395.1,615.0 395.6,612.8 396.1,609.4 396.6,612.3 397.1,614.6 397.6,608.3 398.1,604.4 398.6,608.9 399.1,606.8 399.6,610.9 400.1,610.9 400.6,610.8 401.1,608.0 401.6,608.8 402.1,608.6 402.6,602.3 403.1,612.2 403.6,605.6 404.1,610.0 404.6,612.6 405.1,609.0 405.6,607.5 406.1,608.1 406.6,609.7 407.1,607.9 407.6,611.8 408.1,612.1 408.6,612.2 409.1,605.9 409.6,607.8 410.1,606.8 410.6,610.5 411.1,603.1 411.6,608.3 412.1,604.9 412.6,611.4 413.1,607.8 413.6,606.7 414.1,607.6 414.6,606.7 415.1,607.1 415.6,607.3 416.1,608.2 416.6,611.2 417.1,603.9 417.6,608.1 418.1,604.1 418.6,612.5 419.1,608.8 419.6,608.8 420.1,609.2 420.6,612.6 421.1,607.7 421.6,611.4 422.1,612.6 422.6,610.8 423.1,604.3 423.6,613.8 424.1,609.7 424.6,608.1 425.1,608.9 425.6,608.9 426.1,605.7 426.6,608.8 427.1,605.1 427.6,610.1 428.1,606.8 428.6,608.4 429.1,608.2 429.6,612.6 430.1,609.1 430.6,614.3 431.1,604.7 431.6,614.6 432.1,609.6 432.6,611.4 433.1,610.7 433.6,610.3 434.1,608.5 434.6,614.5 435.1,609.0 435.6,609.2 436.1,612.1 436.6,610.5 437.1,604.7 437.6,610.7 438.1,612.8 438.6,614.3 439.1,609.6 439.6,611.1 440.1,605.0 440.6,614.2 441.1,610.4 441.6,613.4 442.1,609.5 442.6,615.6 443.1,610.1 443.6,613.1 444.1,611.7 444.6,613.6 445.1,607.9 445.6,615.1 446.1,610.2 446.6,613.3 447.1,614.9 447.6,613.6 448.1,615.2 448.6,611.7 449.1,609.8 449.6,613.8 450.1,608.8 450.6,616.2 451.1,611.8 451.6,616.1 452.1,614.3 452.6,613.8 453.1,609.7 453.6,612.8 454.1,609.1 454.6,612.4 455.1,608.6 455.6,612.3 456.1,604.5 456.6,615.0 457.1,610.9 457.6,614.1 458.1,611.2 458.6,615.8 459.1,610.9 459.6,615.5 460.1,614.3 460.6,616.1 461.1,611.4 461.6,617.8 462.1,613.7 462.6,619.6 463.1,616.3 463.6,617.5 464.1,610.8 464.6,618.3 465.1,619.3 465.6,616.2 466.1,614.0 466.6,619.4 467.1,614.8 467.6,616.7 468.1,612.3 468.6,620.0 469.1,618.0 469.6,619.2 470.1,615.7 470.6,617.2 471.1,619.7 471.6,620.5 472.1,617.5 472.6,621.4 473.1,617.9 473.6,617.5 474.1,616.5 474.6,623.0 475.1,614.8 475.6,619.8 476.1,616.7 476.6,621.2 477.1,617.4 477.6,621.3 478.1,613.2 478.6,619.6 479.1,621.0 479.6,622.7 480.1,621.1 480.6,625.2 481.1,618.5 481.6,624.4 482.1,622.6 482.6,625.7 483.1,624.6 483.6,626.2 484.1,618.1 484.6,623.9 485.1,621.0 485.6,622.7 486.1,623.0 486.6,627.6 487.1,624.6 487.6,625.7 488.1,628.8 488.6,627.8 489.1,622.5 489.6,628.9 490.1,630.0 490.6,630.1 491.1,626.8 491.6,634.3 492.1,630.7 492.6,630.9 493.1,623.2 493.6,635.3 494.1,627.7 494.6,634.8 495.1,632.7 495.6,634.6 496.1,630.1 496.6,634.9 497.1,633.1 497.6,638.7 498.1,634.4 498.6,638.1 499.1,633.2 499.6,635.4 500.1,633.7 500.6,638.3 501.1,630.5 501.6,637.7 502.1,631.2 502.6,642.1 503.1,633.4 503.6,640.0 504.1,634.4 504.6,639.8 505.1,639.9 505.6,644.4 506.1,635.0 506.6,640.0 507.1,638.9 507.6,644.4 508.1,638.4 508.6,645.0 509.1,637.9 509.6,640.5 510.1,635.3 510.6,647.1 511.1,641.5 511.6,645.7 512.1,639.6 512.6,647.1 513.1,641.2 513.6,643.2 514.1,641.8 514.6,648.8 515.1,635.7 515.6,646.8 516.1,641.8 516.6,651.9 517.1,645.3 517.6,648.8 518.1,641.4 518.6,650.8 519.1,645.7 519.6,652.0 520.1,646.0 520.6,652.9 521.1,642.9 521.6,650.0 522.1,645.2 522.6,649.9 523.1,647.8 523.6,651.8 524.1,648.3 524.6,654.2 525.1,648.4 525.6,653.3 526.1,647.9 526.6,651.7 527.1,650.3 527.6,653.4 528.1,649.4 528.6,655.6 529.1,647.4 529.6,655.5 530.1,641.2 530.6,654.6 531.1,648.1 531.6,655.0 532.1,651.7 532.6,651.9 533.1,646.3 533.6,656.1 534.1,643.1 534.6,652.8 535.1,645.5 535.6,653.0 536.1,643.9 536.6,650.7 537.1,649.6 537.6,651.2 538.1,640.7 538.6,647.9 539.1,646.5 539.6,649.0 540.1,640.8 540.6,645.7 541.1,641.9 541.6,648.3 542.1,641.7 542.6,647.9 543.1,640.6 543.6,646.6 544.1,636.1 544.6,644.7 545.1,638.9 545.6,644.6 546.1,635.7 546.6,645.6 547.1,641.1 547.6,641.7 548.1,639.0 548.6,642.4 549.1,638.5 549.6,641.4 550.1,634.0 550.6,642.5 551.1,636.2 551.6,643.0 552.1,634.8 552.6,638.1 553.1,634.7 553.6,642.9 554.1,627.3 554.6,641.7 555.1,630.7 555.6,639.9 556.1,635.1 556.6,637.3 557.1,634.2 557.6,640.0 558.1,625.4 558.6,636.4 559.1,634.2 559.6,634.4 560.1,632.4 560.6,636.8 561.1,627.4 561.6,637.2 562.1,631.7 562.6,633.3 563.1,624.3 563.6,637.7 564.1,627.3 564.6,633.0 565.1,625.1 565.6,636.7 566.1,618.9 566.6,631.0 567.1,628.8 567.6,633.8 568.1,628.7 568.6,632.1 569.1,626.2 569.6,636.2 570.1,625.5 570.6,632.9 571.1,626.6 571.6,632.6 572.1,629.5 572.6,633.0 573.1,622.2 573.6,629.3 574.1,619.0 574.6,629.5 575.1,628.7 575.6,629.9 576.1,621.1 576.6,630.4 577.1,622.9 577.6,627.6 578.1,622.4 578.6,627.1 579.1,622.5 579.6,626.5 580.1,621.2 580.6,628.0 581.1,618.0 581.6,625.7 582.1,618.2 582.6,623.1 583.1,619.7 583.6,627.6 584.1,619.5 584.6,625.6 585.1,616.9 585.6,622.8 586.1,614.9 586.6,624.1 587.1,616.8 587.6,624.4 588.1,615.0 588.6,624.3 589.1,620.2 589.6,621.5 590.1,617.1 590.6,622.4 591.1,615.9 591.6,622.8 592.1,616.5 592.6,623.8 593.1,617.7 593.6,619.4 594.1,612.2 594.6,621.1 595.1,615.3 595.6,620.6 596.1,611.3 596.6,620.6 597.1,613.6 597.6,621.8 598.1,613.8 598.6,617.6 599.1,612.7 599.6,620.8 600.1,613.7 600.6,620.0 601.1,609.6 601.6,617.4 602.1,608.1 602.6,614.1 603.1,609.0 603.6,618.3 604.1,610.6 604.6,620.2 605.1,611.2 605.6,617.0 606.1,603.9 606.6,617.4 607.1,605.8 607.6,614.9 608.1,610.1 608.6,615.7 609.1,605.7 609.6,613.7 610.1,608.4 610.6,616.6 611.1,606.9 611.6,613.6 612.1,604.8 612.6,615.9 613.1,607.4 613.6,618.9 614.1,606.9 614.6,614.6 615.1,605.4 615.6,614.4 616.1,607.7 616.6,614.5 617.1,604.3 617.6,617.2 618.1,607.0 618.6,611.8 619.1,606.7 619.6,616.6 620.1,603.2 620.6,608.4 621.1,606.6 621.6,613.2 622.1,608.8 622.6,614.3 623.1,606.2 623.6,612.5 624.1,605.2 624.6,617.0 625.1,606.3 625.6,612.8 626.1,608.9 626.6,615.7 627.1,607.8 627.6,614.7 628.1,610.6 628.6,615.2 629.1,608.1 629.6,611.8 630.1,607.0 630.6,618.8 631.1,609.4 631.6,616.4 632.1,607.6 632.6,614.4 633.1,612.0 633.6,616.9 634.1,594.9 634.6,620.7 635.1,609.1 635.6,619.1 636.1,608.2 636.6,619.4 637.1,612.0 637.6,618.5 638.1,611.3 638.6,619.2 639.1,609.7 639.6,621.0 640.1,610.9 640.6,620.6 641.1,610.2 641.6,621.3 642.1,610.0 642.6,621.9 643.1,611.8 643.6,621.0 644.1,617.5 644.6,623.2 645.1,614.9 645.6,625.6 646.1,615.8 646.6,625.3 647.1,612.7 647.6,625.5 648.1,620.7 648.6,624.5 649.1,619.6 649.6,626.3 650.1,604.6 650.6,627.6 651.1,619.9 651.6,628.8 652.1,621.4 652.6,630.8 653.1,618.2 653.6,628.9 654.1,620.6 654.6,632.3 655.1,623.1 655.6,633.3 656.1,621.2 656.6,632.3 657.1,618.4 657.6,629.6 658.1,620.7 658.6,632.4 659.1,620.4 659.6,636.4 660.1,620.0 660.6,632.2 661.1,619.9 661.6,637.0 662.1,619.4 662.6,634.2 663.1,626.2 663.6,634.9 664.1,626.8 664.6,632.1 665.1,621.5 665.6,635.7 666.1,626.7 666.6,631.6 667.1,625.8 667.6,637.6 668.1,625.7 668.6,635.0 669.1,627.1 669.6,634.8 670.1,629.4 670.6,639.0 671.1,627.0 671.6,635.5 672.1,629.1 672.6,640.3 673.1,631.0 673.6,637.7 674.1,625.0 674.6,639.6 675.1,629.0 675.6,640.0 676.1,622.0 676.6,636.2 677.1,620.9 677.6,638.0 678.1,628.8 678.6,639.7 679.1,626.8 679.6,635.8 680.1,624.0 680.6,638.6 681.1,629.1 681.6,639.1 682.1,622.9 682.6,637.8 683.1,625.6 683.6,636.9 684.1,627.0 684.6,638.3 685.1,626.0 685.6,635.8 686.1,624.3 686.6,637.9 687.1,624.7 687.6,636.7 688.1,618.3 688.6,631.6 689.1,625.9 689.6,631.5 690.1,622.8 690.6,632.0 691.1,617.6 691.6,630.7 692.1,620.5 692.6,630.8 693.1,615.4 693.6,630.9 694.1,621.7 694.6,627.8 695.1,620.6 695.6,632.2 696.1,619.9 696.6,626.5 697.1,620.5 697.6,628.4 698.1,616.4 698.6,625.3 699.1,618.4 699.6,626.0 700.1,615.5 700.6,625.8 701.1,616.5 701.6,622.7 702.1,611.7 702.6,628.8 703.1,614.0 703.6,622.3 704.1,613.8 704.6,623.8 705.1,616.6 705.6,620.9 706.1,614.1 706.6,622.2 707.1,611.2 707.6,623.4 708.1,612.7 708.6,624.2 709.1,611.9 709.6,623.9 710.1,610.9 710.6,620.1 711.1,608.5 711.6,619.6 712.1,607.2 712.6,619.5 713.1,608.6 713.6,622.6 714.1,609.1 714.6,616.5 715.1,607.1 715.6,619.1 716.1,607.9 716.6,616.4 717.1,603.1 717.6,617.7 718.1,607.6 718.6,617.4 719.1,608.0 719.6,614.1 720.1,607.9 720.6,619.0 721.1,600.3 721.6,616.3 722.1,607.2 722.6,615.9 723.1,608.2 723.6,614.0 724.1,603.4 724.6,616.6 725.1,602.9 725.6,615.5 726.1,596.7 726.6,616.3 727.1,599.6 727.6,617.3 728.1,599.3 728.6,610.9 729.1,604.4 729.6,614.3 730.1,602.4 730.6,613.7 731.1,600.4 731.6,616.0 732.1,604.7 732.6,614.3 733.1,601.0 733.6,615.5 734.1,592.3 734.6,616.1 735.1,600.2 735.6,615.0 736.1,601.3 736.6,613.9 737.1,598.9 737.6,611.7 738.1,598.3 738.6,612.8 739.1,600.6 739.6,614.5 740.1,600.7 740.6,615.0 741.1,597.7 741.6,612.8 742.1,597.9 742.6,610.2 743.1,596.1 743.6,612.4 744.1,594.2 744.6,608.1 745.1,597.7 745.6,612.0 746.1,601.3 746.6,612.4 747.1,596.9 747.6,611.5 748.1,590.3 748.6,613.0 749.1,600.8 749.6,608.7 750.1,601.0 750.6,611.7 751.1,595.1 751.6,608.4 752.1,597.8 752.6,613.3 753.1,593.6 753.6,616.5 754.1,599.3 754.6,611.0 755.1,593.9 755.6,609.7 756.1,596.5 756.6,609.3 757.1,595.2 757.6,605.3 758.1,597.7 758.6,606.6 759.1,593.8 759.6,608.7 760.1,596.5 760.6,606.0 761.1,594.9 761.6,603.4 762.1,591.1 762.6,604.8 763.1,588.0 763.6,605.2 764.1,595.2 764.6,609.9 765.1,591.2 765.6,603.1 766.1,594.6 766.6,606.3 767.1,589.7 767.6,606.9 768.1,595.1 768.6,606.4 769.1,583.7 769.6,606.4 770.1,593.5 770.6,603.4 771.1,589.1 771.6,601.9 772.1,592.4 772.6,601.5 773.1,590.2 773.6,603.4 774.1,591.5 774.6,605.8 775.1,591.3 775.6,605.0 776.1,589.0 776.6,600.3 777.1,589.8 777.6,599.4 778.1,588.1 778.6,601.8 779.1,586.1 779.6,605.3 780.1,586.6 780.6,599.4 781.1,590.6 781.6,601.2 782.1,585.1 782.6,601.4 783.1,584.5 783.6,601.7 784.1,587.6 784.6,597.1 785.1,582.2 785.6,602.7 786.1,591.2 786.6,598.0 787.1,587.0 787.6,599.2 788.1,585.5 788.6,596.2 789.1,584.0 789.6,597.9 790.1,582.4 790.6,596.2 791.1,583.2 791.6,594.2 792.1,581.9 792.6,597.2 793.1,584.5 793.6,597.8 794.1,581.0 794.6,593.6 795.1,582.1 795.6,598.8 796.1,575.8 796.6,593.7 797.1,581.1 797.6,592.7 798.1,577.2 798.6,596.8 799.1,580.9 799.6,594.6 800.1,578.7 800.6,590.2 801.1,582.7 801.6,590.7 802.1,580.3 802.6,591.8 803.1,581.5 803.6,588.6 804.1,574.3 804.6,590.4 805.1,575.2 805.6,587.2 806.1,575.9 806.6,591.6 807.1,576.8 807.6,588.3 808.1,575.9 808.6,587.3 809.1,575.4 809.6,591.2 810.1,578.4 810.6,584.5 811.1,573.6 811.6,586.7 812.1,568.8 812.6,586.4 813.1,573.1 813.6,586.5 814.1,572.6 814.6,586.4 815.1,570.8 815.6,585.4 816.1,569.6 816.6,586.5 817.1,566.1 817.6,585.5 818.1,568.8 818.6,583.8 819.1,568.0 819.6,582.5 820.1,569.2 820.6,584.0 821.1,571.0 821.6,582.9 822.1,568.1 822.6,581.8 823.1,567.6 823.6,582.6 824.1,566.7 824.6,579.7 825.1,567.9 825.6,581.4 826.1,569.4 826.6,582.5 827.1,569.8 827.6,582.5 828.1,570.1 828.6,581.0 829.1,563.4 829.6,578.1 830.1,565.3 830.6,582.2 831.1,564.3 831.6,577.2 832.1,564.6 832.6,578.5 833.1,565.1 833.6,579.2 834.1,563.5 834.6,578.2 835.1,563.9 835.6,578.4 836.1,559.8 836.6,577.3 837.1,564.1 837.6,575.7 838.1,561.9 838.6,576.3 839.1,558.3 839.6,574.8 840.1,563.8 840.6,575.7 841.1,561.0 841.6,577.7 842.1,562.4 842.6,573.1 843.1,557.6 843.6,571.7 844.1,560.3 844.6,572.5 845.1,559.1 845.6,575.1 846.1,557.1 846.6,572.4 847.1,558.2 847.6,573.1 848.1,553.8 848.6,570.0 849.1,556.0 849.6,573.2 850.1,555.8 850.6,568.8 851.1,556.6 851.6,568.8 852.1,558.0 852.6,569.3 853.1,558.4 853.6,566.7 854.1,558.4 854.6,565.9 855.1,554.2 855.6,568.2 856.1,555.0 856.6,566.0 857.1,553.4 857.6,569.9 858.1,555.4 858.6,564.8 859.1,552.3 859.6,566.7 860.1,555.9 860.6,568.0 861.1,552.8 861.6,566.8 862.1,554.5 862.6,565.1 863.1,547.9 863.6,567.7 864.1,547.3 864.6,564.3 865.1,551.5 865.6,564.1 866.1,551.2 866.6,562.7 867.1,549.1 867.6,563.7 868.1,547.8 868.6,565.2 869.1,551.5 869.6,562.6 870.1,550.1 870.6,563.0 871.1,548.9 871.6,563.2 872.1,550.0 872.6,561.7 873.1,548.2 873.6,562.2 874.1,544.5 874.6,565.6 875.1,543.2 875.6,562.6 876.1,546.5 876.6,560.4 877.1,545.1 877.6,557.9 878.1,546.7 878.6,559.2 879.1,547.6 879.6,556.7 880.1,542.4 880.6,557.5 881.1,544.8 881.6,557.4 882.1,542.4 882.6,556.2 883.1,535.9 883.6,557.5 884.1,544.2 884.6,555.8 885.1,541.9 885.6,558.2 886.1,541.7 886.6,555.2 887.1,543.0 887.6,556.4 888.1,541.2 888.6,553.9 889.1,538.3 889.6,555.4 890.1,540.2 890.6,553.8 891.1,541.5 891.6,553.8 892.1,541.1 892.6,550.3 893.1,538.4 893.6,551.3 894.1,534.7 894.6,554.5 895.1,534.7 895.6,553.5 896.1,536.9 896.6,553.4 897.1,536.3 897.6,551.3 898.1,538.4 898.6,553.5 899.1,538.9 899.6,548.1 900.1,537.6 900.6,548.4 901.1,535.0 901.6,551.5 902.1,518.4 902.6,502.1 902.7,497.6 903.1,514.8 903.6,548.8 904.1,534.7 904.6,551.8 905.1,552.1 905.6,550.2 906.1,531.4 906.6,547.7 907.1,508.5 907.6,545.7 908.1,532.7 908.6,546.8 909.1,532.4 909.6,548.8 910.1,530.7 910.6,547.0 911.1,531.6 911.6,547.0 912.1,532.3 912.6,545.6 913.1,530.1 913.6,544.2 914.1,527.3 914.6,545.1 915.1,523.7 915.6,542.6 916.1,530.7 916.6,544.0 917.1,525.7 917.6,540.0 918.1,526.2 918.6,541.9 919.1,527.5 919.6,540.9 920.1,520.9 920.6,542.7 921.1,525.7 921.6,539.1 922.1,526.2 922.6,542.5 923.1,524.0 923.6,539.7 924.1,527.3 924.6,541.8 925.1,523.1 925.6,539.7 926.1,522.0 926.6,539.4 927.1,524.7 927.6,539.0 928.1,524.6 928.6,538.0 929.1,522.3 929.6,538.5 930.1,525.5 930.6,537.4 931.1,524.1 931.6,539.5 932.1,524.7 932.6,540.6 933.1,523.0 933.6,539.2 934.1,523.1 934.6,534.9 935.1,523.0 935.6,538.2 936.1,522.4 936.6,535.3 937.1,523.9 937.6,537.4 938.1,521.3 938.6,537.1 939.1,520.0 939.6,537.6 940.1,521.9 940.6,536.0 941.1,517.5 941.6,537.0 942.1,520.2 942.6,540.0 943.1,519.8 943.6,536.4 944.1,518.1 944.6,534.1 945.1,512.1 945.6,533.0 946.1,519.8 946.6,537.4" stroke="#8b008b" stroke-width="1.1" fill="none" stroke-linejoin="round"/><path d="M337.0 198.3V719.2M332.5 714.7H948.2" stroke="#000" stroke-width="2" fill="none"/><circle cx="902.7" cy="498.3" r="5.3" fill="none" stroke="#8b008b" stroke-width="1.1"/><text x="329" y="719.01" font-size="12.8" text-anchor="end" >-10</text><text x="329" y="654.58" font-size="12.8" text-anchor="end" >0</text><text x="329" y="590.16" font-size="12.8" text-anchor="end" >10</text><text x="329" y="525.73" font-size="12.8" text-anchor="end" >20</text><text x="329" y="461.31" font-size="12.8" text-anchor="end" >30</text><text x="329" y="396.88" font-size="12.8" text-anchor="end" >40</text><text x="329" y="332.46" font-size="12.8" text-anchor="end" >50</text><text x="329" y="268.03" font-size="12.8" text-anchor="end" >60</text><text x="329" y="203.61" font-size="12.8" text-anchor="end" >70</text><text x="337.5" y="733.41" font-size="12.8" text-anchor="middle" >30</text><text x="545.5" y="733.41" font-size="12.8" text-anchor="middle" >100</text><text x="946.5" y="733.41" font-size="12.8" text-anchor="middle" >1000</text><text x="589.3" y="766.31" font-size="12.8" text-anchor="start"  textLength="104" lengthAdjust="spacing">Frequency [MHz]</text><g transform="translate(282.3,456.3) rotate(-90)"><text x="-47.5" y="4.61" font-size="12.8" text-anchor="start"  textLength="95" lengthAdjust="spacing">Level [dBµV/m]</text></g><text x="249.00" y="168.62" font-size="12" xml:space="preserve">EUT1, </text><text x="286.34" y="168.62" font-size="12" textLength="26.7" lengthAdjust="spacingAndGlyphs">モード</text><text x="313.07" y="168.62" font-size="12" xml:space="preserve">A</text><rect x="291.2" y="198.3" width="14.5" height="14.6" fill="#f0f0f0"/><path d="M291.7 212.9V198.8H305.7" stroke="#fff" stroke-width="1" fill="none"/><path d="M305.2 198.3V212.4H291.2" stroke="#6e6e6e" stroke-width="1.2" fill="none"/><path d="M296.95 202.60000000000002l3.5 3-3.5 3z" fill="#000"/><rect x="291.2" y="212.9" width="14.5" height="14.9" fill="#f0f0f0"/><path d="M291.7 227.8V213.4H305.7" stroke="#fff" stroke-width="1" fill="none"/><path d="M305.2 212.9V227.3H291.2" stroke="#6e6e6e" stroke-width="1.2" fill="none"/><path d="M295.45 221.54999999999998l3-3.2 3 3.2z" fill="#000"/><rect x="291.2" y="227.8" width="14.5" height="471.6" fill="#f0f0f0"/><path d="M291.7 699.4000000000001V228.3H305.7" stroke="#fff" stroke-width="1" fill="none"/><path d="M305.2 227.8V698.9000000000001H291.2" stroke="#6e6e6e" stroke-width="1.2" fill="none"/><rect x="291.2" y="699.4" width="14.5" height="14.2" fill="#f0f0f0"/><path d="M291.7 713.6V699.9H305.7" stroke="#fff" stroke-width="1" fill="none"/><path d="M305.2 699.4V713.1H291.2" stroke="#6e6e6e" stroke-width="1.2" fill="none"/><path d="M295.45 705.0l3 3.2 3-3.2z" fill="#000"/><rect x="336.5" y="737.5" width="14.2" height="14" fill="#f0f0f0"/><path d="M337.0 751.5V738.0H350.7" stroke="#fff" stroke-width="1" fill="none"/><path d="M350.2 737.5V751.0H336.5" stroke="#6e6e6e" stroke-width="1.2" fill="none"/><path d="M340.6 743.0l3 3.2 3-3.2z" fill="#000"/><rect x="350.7" y="737.5" width="14.2" height="14" fill="#f0f0f0"/><path d="M351.2 751.5V738.0H364.9" stroke="#fff" stroke-width="1" fill="none"/><path d="M364.4 737.5V751.0H350.7" stroke="#6e6e6e" stroke-width="1.2" fill="none"/><path d="M359.3 741.5l-3.5 3 3.5 3z" fill="#000"/><rect x="364.9" y="737.5" width="566.2" height="14" fill="#f0f0f0"/><path d="M365.4 751.5V738.0H931.1" stroke="#fff" stroke-width="1" fill="none"/><path d="M930.6 737.5V751.0H364.9" stroke="#6e6e6e" stroke-width="1.2" fill="none"/><rect x="931.1" y="737.5" width="14.6" height="14" fill="#f0f0f0"/><path d="M931.6 751.5V738.0H945.7" stroke="#fff" stroke-width="1" fill="none"/><path d="M945.2 737.5V751.0H931.1" stroke="#6e6e6e" stroke-width="1.2" fill="none"/><path d="M936.9 741.5l3.5 3-3.5 3z" fill="#000"/><path d="M984.5 427.5H1021.8" stroke="#1212a8" stroke-width="1" stroke-dasharray="2.6 1.5" fill="none"/><text x="1026" y="432.31" font-size="12.8" text-anchor="start" >QP</text><path d="M984.5 461.5H1021.8" stroke="#e100e1" stroke-width="1" fill="none"/><text x="1026.00" y="466.11" font-size="12.8" xml:space="preserve">PK:</text><text x="1046.63" y="466.11" font-size="13.0">水平</text><path d="M984.5 478.5H1021.8" stroke="#8b008b" stroke-width="1" fill="none"/><text x="1026.00" y="483.11" font-size="12.8" xml:space="preserve">PK:</text><text x="1046.63" y="483.11" font-size="13.0">垂直</text><circle cx="1002.4" cy="512" r="5" fill="none" stroke="#8b008b" stroke-width="1.1"/><text x="1026.00" y="516.61" font-size="12.8" xml:space="preserve">PK:</text><text x="1046.63" y="516.61" font-size="13.0">垂直</text><path d="M997.4 529.6l5-5 5 5-5 5z" fill="none" stroke="#1e7a1e" stroke-width="1"/><text x="1026.00" y="534.21" font-size="12.8" xml:space="preserve">QP:</text><text x="1048.05" y="534.21" font-size="13.0">垂直</text><rect x="1092.3" y="172.5" width="297.1" height="295.3" rx="3" fill="#fff" stroke="#6e6e6e" stroke-width="2"/><path d="M1156.5 183.3V431.9M1170.5 183.3V431.9M1183.5 183.3V431.9M1193.5 183.3V431.9M1201.5 183.3V431.9M1209.5 183.3V431.9M1216.5 183.3V431.9M1262.5 183.3V431.9M1289.5 183.3V431.9M1308.5 183.3V431.9M1322.5 183.3V431.9M1334.5 183.3V431.9M1344.5 183.3V431.9M1353.5 183.3V431.9M1361.5 183.3V431.9M1138.1 401.5H1369.4M1138.1 370.5H1369.4M1138.1 339.5H1369.4M1138.1 308.5H1369.4M1138.1 277.5H1369.4M1138.1 245.5H1369.4M1138.1 214.5H1369.4" stroke="#d4d4d4" stroke-width="1" fill="none"/><path d="M1134.1 183.3H1369.4V435.9" stroke="#787878" stroke-width="1.5" fill="none"/><path d="M1134.1 431.9H1138.1M1134.1 400.8H1138.1M1134.1 369.8H1138.1M1134.1 338.7H1138.1M1134.1 307.6H1138.1M1134.1 276.5H1138.1M1134.1 245.5H1138.1M1134.1 214.4H1138.1M1137.8 431.9V435.9M1217.2 431.9V435.9" stroke="#555" stroke-width="1.3" fill="none"/><path d="M1138.1 245.5H1271.5V223.5H1369.4" stroke="#1212a8" stroke-width="1" stroke-dasharray="2.6 1.5" fill="none"/><polyline points="1137.3,385.3 1137.7,388.8 1138.1,387.1 1138.5,388.5 1138.9,385.3 1139.3,388.4 1139.7,381.4 1140.1,388.4 1140.5,384.8 1140.9,387.0 1141.3,385.9 1141.7,385.4 1142.1,384.8 1142.5,386.6 1142.9,385.5 1143.3,386.5 1143.7,381.9 1144.1,385.2 1144.5,384.4 1144.9,387.7 1145.3,384.0 1145.7,386.8 1146.1,384.2 1146.5,387.2 1146.9,383.6 1147.3,386.2 1147.7,383.6 1148.1,385.4 1148.5,382.9 1148.9,385.5 1149.3,382.5 1149.7,384.6 1150.1,383.0 1150.5,384.9 1150.9,383.0 1151.3,386.0 1151.7,379.9 1152.1,384.5 1152.5,380.4 1152.9,384.3 1153.3,383.1 1153.7,384.6 1154.1,380.8 1154.5,385.2 1154.9,381.8 1155.3,384.2 1155.7,381.0 1156.1,384.0 1156.5,382.4 1156.9,381.4 1157.3,382.7 1157.7,383.2 1158.1,381.2 1158.5,383.9 1158.9,380.2 1159.3,382.5 1159.7,381.6 1160.1,382.6 1160.5,377.2 1160.9,383.0 1161.3,379.0 1161.7,381.9 1162.1,379.2 1162.5,383.1 1162.9,373.1 1163.3,383.0 1163.7,380.6 1164.1,381.7 1164.5,378.2 1164.9,381.0 1165.3,380.0 1165.7,382.4 1166.1,379.8 1166.5,380.6 1166.9,379.1 1167.3,381.1 1167.7,377.3 1168.1,382.7 1168.5,380.3 1168.9,382.8 1169.3,378.9 1169.7,383.1 1170.1,379.0 1170.5,382.8 1170.9,379.7 1171.3,382.1 1171.7,379.9 1172.1,381.5 1172.5,379.4 1172.9,383.5 1173.3,380.9 1173.7,382.1 1174.1,380.9 1174.5,383.8 1174.9,379.1 1175.3,384.5 1175.7,378.5 1176.1,384.1 1176.5,380.7 1176.9,384.6 1177.3,380.9 1177.7,381.5 1178.1,380.9 1178.5,382.4 1178.9,379.5 1179.3,382.5 1179.7,381.5 1180.1,385.6 1180.5,380.0 1180.9,383.4 1181.3,379.5 1181.7,385.3 1182.1,376.2 1182.5,381.9 1182.9,379.9 1183.3,383.2 1183.7,381.2 1184.1,385.7 1184.5,382.2 1184.9,384.9 1185.3,383.4 1185.7,385.1 1186.1,382.6 1186.5,386.8 1186.9,382.3 1187.3,384.8 1187.7,382.1 1188.1,387.2 1188.5,384.4 1188.9,387.2 1189.3,383.6 1189.7,387.3 1190.1,384.9 1190.5,388.7 1190.9,384.0 1191.3,388.9 1191.7,385.6 1192.1,389.8 1192.5,384.6 1192.9,388.7 1193.3,385.9 1193.7,390.6 1194.1,386.3 1194.5,389.2 1194.9,387.3 1195.3,390.9 1195.7,385.1 1196.1,393.3 1196.5,389.2 1196.9,393.3 1197.3,391.0 1197.7,393.3 1198.1,390.1 1198.5,395.8 1198.9,389.1 1199.3,395.4 1199.7,389.1 1200.1,395.3 1200.5,393.9 1200.9,398.0 1201.3,392.0 1201.7,397.2 1202.1,393.0 1202.5,399.2 1202.9,395.9 1203.3,399.7 1203.7,394.7 1204.1,399.4 1204.5,395.7 1204.9,402.4 1205.3,395.6 1205.7,399.9 1206.1,398.2 1206.5,402.3 1206.9,396.0 1207.3,402.2 1207.7,397.2 1208.1,401.4 1208.5,398.7 1208.9,402.3 1209.3,401.3 1209.7,404.8 1210.1,399.4 1210.5,404.6 1210.9,399.1 1211.3,404.2 1211.7,399.1 1212.1,402.9 1212.5,398.1 1212.9,403.3 1213.3,397.0 1213.7,400.9 1214.1,395.8 1214.5,401.8 1214.9,394.6 1215.3,399.0 1215.7,394.9 1216.1,400.0 1216.5,393.6 1216.9,398.4 1217.3,393.9 1217.7,396.3 1218.1,393.3 1218.5,397.2 1218.9,392.5 1219.3,395.9 1219.7,391.4 1220.1,394.8 1220.5,391.2 1220.9,396.4 1221.3,389.7 1221.7,395.3 1222.1,391.3 1222.5,393.7 1222.9,389.5 1223.3,394.4 1223.7,390.3 1224.1,394.8 1224.5,389.3 1224.9,392.2 1225.3,389.6 1225.7,393.3 1226.1,387.6 1226.5,392.7 1226.9,389.2 1227.3,393.3 1227.7,388.1 1228.1,391.8 1228.5,385.1 1228.9,391.2 1229.3,386.8 1229.7,390.3 1230.1,384.2 1230.5,391.0 1230.9,386.1 1231.3,389.8 1231.7,383.2 1232.1,389.1 1232.5,382.9 1232.9,388.2 1233.3,383.9 1233.7,390.9 1234.1,383.7 1234.5,389.1 1234.9,383.4 1235.3,388.3 1235.7,381.6 1236.1,387.0 1236.5,382.9 1236.9,386.4 1237.3,382.2 1237.7,385.9 1238.1,380.5 1238.5,386.9 1238.9,377.2 1239.3,386.0 1239.7,374.7 1240.1,387.4 1240.5,377.4 1240.9,384.5 1241.3,379.7 1241.7,384.7 1242.1,380.6 1242.5,385.2 1242.9,376.0 1243.3,385.0 1243.7,378.6 1244.1,384.7 1244.5,380.3 1244.9,384.3 1245.3,378.0 1245.7,382.8 1246.1,377.0 1246.5,384.7 1246.9,378.2 1247.3,384.1 1247.7,379.2 1248.1,386.5 1248.5,377.9 1248.9,384.4 1249.3,380.4 1249.7,386.2 1250.1,379.0 1250.5,385.9 1250.9,377.6 1251.3,386.7 1251.7,379.3 1252.1,389.0 1252.5,373.9 1252.9,386.4 1253.3,381.9 1253.7,390.4 1254.1,380.8 1254.5,388.8 1254.9,382.6 1255.3,389.3 1255.7,383.7 1256.1,393.3 1256.5,381.6 1256.9,391.1 1257.3,386.0 1257.7,392.8 1258.1,387.1 1258.5,392.6 1258.9,384.6 1259.3,393.6 1259.7,385.8 1260.1,393.5 1260.5,385.6 1260.9,395.1 1261.3,388.2 1261.7,395.2 1262.1,389.1 1262.5,393.7 1262.9,387.5 1263.3,394.5 1263.7,389.1 1264.1,396.1 1264.5,386.7 1264.9,396.8 1265.3,388.5 1265.7,394.8 1266.1,389.1 1266.5,395.8 1266.9,388.5 1267.3,395.8 1267.7,388.5 1268.1,395.5 1268.5,389.3 1268.9,394.8 1269.3,389.6 1269.7,397.1 1270.1,383.1 1270.5,393.6 1270.9,388.1 1271.3,391.8 1271.7,384.9 1272.1,392.8 1272.5,382.1 1272.9,391.1 1273.3,380.2 1273.7,392.6 1274.1,382.0 1274.5,390.1 1274.9,384.6 1275.3,391.0 1275.7,382.0 1276.1,389.5 1276.5,381.3 1276.9,389.1 1277.3,379.8 1277.7,387.2 1278.1,381.6 1278.5,388.8 1278.9,379.4 1279.3,386.0 1279.7,377.6 1280.1,388.2 1280.5,379.6 1280.9,386.5 1281.3,377.2 1281.7,387.7 1282.1,377.2 1282.5,385.9 1282.9,378.3 1283.3,386.1 1283.7,375.5 1284.1,386.4 1284.5,377.1 1284.9,386.0 1285.3,376.2 1285.7,385.6 1286.1,377.1 1286.5,383.8 1286.9,377.8 1287.3,385.0 1287.7,376.7 1288.1,384.1 1288.5,375.7 1288.9,383.0 1289.3,377.1 1289.7,383.2 1290.1,376.1 1290.5,383.1 1290.9,374.1 1291.3,382.3 1291.7,375.0 1292.1,381.8 1292.5,375.3 1292.9,382.1 1293.3,373.1 1293.7,383.5 1294.1,374.0 1294.5,384.3 1294.9,375.0 1295.3,380.9 1295.7,372.6 1296.1,380.4 1296.5,369.6 1296.9,381.2 1297.3,371.5 1297.7,379.6 1298.1,371.0 1298.5,380.3 1298.9,371.9 1299.3,380.9 1299.7,370.2 1300.1,380.6 1300.5,371.3 1300.9,380.5 1301.3,372.3 1301.7,380.6 1302.1,370.5 1302.5,378.9 1302.9,369.5 1303.3,378.5 1303.7,367.9 1304.1,379.0 1304.5,366.2 1304.9,377.4 1305.3,368.0 1305.7,376.7 1306.1,368.2 1306.5,381.3 1306.9,368.3 1307.3,377.3 1307.7,367.4 1308.1,378.4 1308.5,367.0 1308.9,375.4 1309.3,366.5 1309.7,375.1 1310.1,367.8 1310.5,373.9 1310.9,366.0 1311.3,375.6 1311.7,363.5 1312.1,375.5 1312.5,365.2 1312.9,373.9 1313.3,365.8 1313.7,374.8 1314.1,365.2 1314.5,371.6 1314.9,364.2 1315.3,373.0 1315.7,363.6 1316.1,372.1 1316.5,362.6 1316.9,372.4 1317.3,361.1 1317.7,372.9 1318.1,361.5 1318.5,369.5 1318.9,361.6 1319.3,371.9 1319.7,362.4 1320.1,370.6 1320.5,361.1 1320.9,369.8 1321.3,358.2 1321.7,368.7 1322.1,356.0 1322.5,369.4 1322.9,360.1 1323.3,368.7 1323.7,359.6 1324.1,366.8 1324.5,352.0 1324.9,369.2 1325.3,358.2 1325.7,366.1 1326.1,358.8 1326.5,367.8 1326.9,357.8 1327.3,368.7 1327.7,357.4 1328.1,365.9 1328.5,356.3 1328.9,363.9 1329.3,354.7 1329.7,366.0 1330.1,354.7 1330.5,364.1 1330.9,347.3 1331.3,363.6 1331.7,354.6 1332.1,362.3 1332.5,352.3 1332.9,362.5 1333.3,356.0 1333.7,363.2 1334.1,352.3 1334.5,361.5 1334.9,353.1 1335.3,362.4 1335.7,352.9 1336.1,362.2 1336.5,352.2 1336.9,361.2 1337.3,350.3 1337.7,359.9 1338.1,351.6 1338.5,359.9 1338.9,351.5 1339.3,360.7 1339.7,350.6 1340.1,359.2 1340.5,350.2 1340.9,358.6 1341.3,349.8 1341.7,359.4 1342.1,348.9 1342.5,358.3 1342.9,347.1 1343.3,358.5 1343.7,348.1 1344.1,357.5 1344.5,348.9 1344.9,356.2 1345.3,347.1 1345.7,357.1 1346.1,347.4 1346.5,357.1 1346.9,347.0 1347.3,356.4 1347.7,346.1 1348.1,354.7 1348.5,347.6 1348.9,355.0 1349.3,341.8 1349.7,353.3 1350.1,343.3 1350.5,354.8 1350.9,344.6 1351.3,352.5 1351.7,330.5 1351.9,322.2 1352.1,333.1 1352.5,343.0 1352.9,353.5 1353.3,343.7 1353.7,351.1 1354.1,332.5 1354.5,350.5 1354.9,342.0 1355.3,352.0 1355.7,343.6 1356.1,350.9 1356.5,342.1 1356.9,349.8 1357.3,342.8 1357.7,351.8 1358.1,340.6 1358.5,349.6 1358.9,341.7 1359.3,347.5 1359.7,342.1 1360.1,348.6 1360.5,338.5 1360.9,350.0 1361.3,339.2 1361.7,348.1 1362.1,339.9 1362.5,347.3 1362.9,339.2 1363.3,346.0 1363.7,338.6 1364.1,347.7 1364.5,337.9 1364.9,346.3 1365.3,337.8 1365.7,347.9 1366.1,337.4 1366.5,346.4 1366.9,338.1 1367.3,346.6 1367.7,338.0 1368.1,346.6 1368.5,335.3" stroke="#8b008b" stroke-width="1" fill="none" stroke-linejoin="round"/><path d="M1138.1 182.3V435.9M1134.1 431.9H1370.4" stroke="#000" stroke-width="2" fill="none"/><text x="1130.5" y="435.67" font-size="11.3" text-anchor="end"  letter-spacing="0.35">-10</text><text x="1130.5" y="404.59" font-size="11.3" text-anchor="end"  letter-spacing="0.35">0</text><text x="1130.5" y="373.52" font-size="11.3" text-anchor="end"  letter-spacing="0.35">10</text><text x="1130.5" y="342.44" font-size="11.3" text-anchor="end"  letter-spacing="0.35">20</text><text x="1130.5" y="311.37" font-size="11.3" text-anchor="end"  letter-spacing="0.35">30</text><text x="1130.5" y="280.29" font-size="11.3" text-anchor="end"  letter-spacing="0.35">40</text><text x="1130.5" y="249.22" font-size="11.3" text-anchor="end"  letter-spacing="0.35">50</text><text x="1130.5" y="218.14" font-size="11.3" text-anchor="end"  letter-spacing="0.35">60</text><text x="1130.5" y="187.07" font-size="11.3" text-anchor="end"  letter-spacing="0.35">70</text><text x="1137.5" y="448.07" font-size="11.3" text-anchor="middle"  letter-spacing="0.35">30</text><text x="1216.5" y="448.07" font-size="11.3" text-anchor="middle"  letter-spacing="0.35">100</text><text x="1368.5" y="448.07" font-size="11.3" text-anchor="middle"  letter-spacing="0.35">1000</text><text x="1207.2" y="462.07" font-size="11.3" text-anchor="start"  textLength="91" lengthAdjust="spacing">Frequency [MHz]</text><g transform="translate(1103.5,307.5) rotate(-90)"><text x="-41.5" y="4.07" font-size="11.3" text-anchor="start"  textLength="83" lengthAdjust="spacing">Level [dBµV/m]</text></g><text x="1093.80" y="168.62" font-size="12" xml:space="preserve">EUT1, </text><text x="1131.14" y="168.62" font-size="12" textLength="26.7" lengthAdjust="spacingAndGlyphs">モード</text><text x="1157.87" y="168.62" font-size="12" xml:space="preserve">A&#160;&#160;</text><text x="1172.54" y="168.62" font-size="12">垂直</text><path d="M1400.5 290.5H1437.6" stroke="#1212a8" stroke-width="1" stroke-dasharray="2.6 1.5" fill="none"/><text x="1442.5" y="294.27" font-size="11.3" text-anchor="start"  letter-spacing="0.35">QP</text><path d="M1400.5 324.5H1437.6" stroke="#8b008b" stroke-width="1" fill="none"/><text x="1442.50" y="328.07" font-size="11.3" letter-spacing="0.35" xml:space="preserve">PK:</text><text x="1461.76" y="328.07" font-size="12.3">垂直</text><rect x="1506" y="172.5" width="295.1" height="287.9" rx="3" fill="#fff" stroke="#6e6e6e" stroke-width="2"/><g fill="none" stroke="#d4d4d4" stroke-width="1"><circle cx="1652.5" cy="310.5" r="13.94"/><circle cx="1652.5" cy="310.5" r="27.88"/><circle cx="1652.5" cy="310.5" r="41.81"/><circle cx="1652.5" cy="310.5" r="55.75"/><circle cx="1652.5" cy="310.5" r="69.69"/><circle cx="1652.5" cy="310.5" r="83.62"/><circle cx="1652.5" cy="310.5" r="97.56"/><path d="M1652.5 310.5L1708.2 213.9M1652.5 310.5L1749.1 254.8M1652.5 310.5L1749.1 366.2M1652.5 310.5L1708.2 407.1M1652.5 310.5L1596.8 407.1M1652.5 310.5L1555.9 366.3M1652.5 310.5L1555.9 254.8M1652.5 310.5L1596.8 213.9"/></g><circle cx="1652.5" cy="310.5" r="93.38" fill="none" stroke="#2020d0" stroke-width="1" stroke-dasharray="2.6 1.5"/><circle cx="1652.5" cy="310.5" r="111.5" fill="none" stroke="#111" stroke-width="1.5"/><path d="M1541.0 310.5H1764.0M1652.5 199.0V422.0M1666.5 307.0v7M1638.5 307.0v7M1649.0 324.5h7M1649.0 296.5h7M1680.5 307.0v7M1624.5 307.0v7M1649.0 338.5h7M1649.0 282.5h7M1694.5 307.0v7M1610.5 307.0v7M1649.0 352.5h7M1649.0 268.5h7M1708.5 307.0v7M1596.5 307.0v7M1649.0 366.5h7M1649.0 254.5h7M1722.5 307.0v7M1582.5 307.0v7M1649.0 380.5h7M1649.0 240.5h7M1736.5 307.0v7M1568.5 307.0v7M1649.0 394.5h7M1649.0 226.5h7M1750.5 307.0v7M1554.5 307.0v7M1649.0 408.5h7M1649.0 212.5h7" stroke="#000" stroke-width="1" fill="none"/><text x="1659.0" y="314.37" font-size="11.3" text-anchor="start"  letter-spacing="0.35">-10</text><text x="1658.0" y="299.43" font-size="11.3" text-anchor="start"  letter-spacing="0.35">0</text><text x="1658.0" y="285.49" font-size="11.3" text-anchor="start"  letter-spacing="0.35">10</text><text x="1658.0" y="271.56" font-size="11.3" text-anchor="start"  letter-spacing="0.35">20</text><text x="1658.0" y="257.62" font-size="11.3" text-anchor="start"  letter-spacing="0.35">30</text><text x="1658.0" y="243.68" font-size="11.3" text-anchor="start"  letter-spacing="0.35">40</text><text x="1658.0" y="229.74" font-size="11.3" text-anchor="start"  letter-spacing="0.35">50</text><text x="1658.0" y="215.81" font-size="11.3" text-anchor="start"  letter-spacing="0.35">60</text><text x="1658.0" y="201.87" font-size="11.3" text-anchor="start"  letter-spacing="0.35">70</text><text x="1651.9" y="194.27" font-size="11.3" text-anchor="middle"  letter-spacing="0.35">0</text><text x="1717.2" y="210.47" font-size="11.3" text-anchor="middle"  letter-spacing="0.35">30</text><text x="1757.4" y="257.67" font-size="11.3" text-anchor="middle"  letter-spacing="0.35">60</text><text x="1771.7" y="313.67" font-size="11.3" text-anchor="middle"  letter-spacing="0.35">90</text><text x="1761.5" y="369.47" font-size="11.3" text-anchor="middle"  letter-spacing="0.35">120</text><text x="1720" y="416.97" font-size="11.3" text-anchor="middle"  letter-spacing="0.35">150</text><text x="1652.2" y="432.77" font-size="11.3" text-anchor="middle"  letter-spacing="0.35">180</text><text x="1584.1" y="416.97" font-size="11.3" text-anchor="middle"  letter-spacing="0.35">210</text><text x="1543" y="368.87" font-size="11.3" text-anchor="middle"  letter-spacing="0.35">240</text><text x="1528.1" y="314.07" font-size="11.3" text-anchor="middle"  letter-spacing="0.35">270</text><text x="1543" y="251.27" font-size="11.3" text-anchor="middle"  letter-spacing="0.35">300</text><text x="1584.1" y="210.47" font-size="11.3" text-anchor="middle"  letter-spacing="0.35">330</text><circle cx="1607.4" cy="323.1" r="4.6" fill="none" stroke="#8b008b" stroke-width="1.1"/><path d="M1609.3 321.2l5-5 5 5-5 5z" fill="none" stroke="#1e7a1e" stroke-width="1"/><path d="M1610.300 316.300l-1.600 2.400 2.400 0.800-2 2 2.800 1.200-1.800 2 3 1.300-1.500 2.300 3.800 0.200" stroke="#8b008b" stroke-width="1.2" fill="none"/><text x="1652.5" y="455.07" font-size="11.3" text-anchor="middle"  letter-spacing="0.35">Level [deg]</text><text x="1506.50" y="168.62" font-size="12" xml:space="preserve">EUT1, </text><text x="1543.84" y="168.62" font-size="12" textLength="26.7" lengthAdjust="spacingAndGlyphs">モード</text><text x="1570.57" y="168.62" font-size="12" xml:space="preserve">A&#160;&#160;</text><text x="1585.24" y="168.62" font-size="12">垂直</text><text x="1506.5" y="473.07" font-size="11.3" text-anchor="start" xml:space="preserve" textLength="220.5" lengthAdjust="spacing">254.4deg  776.96525MHz  23.59dBµV/m</text><path d="M1812.2 256.5H1849.3" stroke="#2020d0" stroke-width="1" stroke-dasharray="2.6 1.5" fill="none"/><text x="1854" y="260.47" font-size="11.3" text-anchor="start"  letter-spacing="0.35">QP</text><path d="M1812.2 289.5H1849.3" stroke="#8b008b" stroke-width="1" fill="none"/><text x="1854.00" y="293.87" font-size="11.3" letter-spacing="0.35" xml:space="preserve">PK:</text><text x="1873.26" y="293.87" font-size="12.3">垂直</text><circle cx="1830.3" cy="324.2" r="5" fill="none" stroke="#8b008b" stroke-width="1.1"/><text x="1854.00" y="328.27" font-size="11.3" letter-spacing="0.35" xml:space="preserve">PK:</text><text x="1873.26" y="328.27" font-size="12.3">垂直</text><path d="M1825.3 341.3l5-5 5 5-5 5z" fill="none" stroke="#1e7a1e" stroke-width="1"/><text x="1854.00" y="345.37" font-size="11.3" letter-spacing="0.35" xml:space="preserve">QP:</text><text x="1874.52" y="345.37" font-size="12.3">垂直</text><path d="M1825.3 354.5h10l-5 9z" fill="none" stroke="#1a1a8c" stroke-width="1.1"/><text x="1854.00" y="363.07" font-size="11.3" letter-spacing="0.35" xml:space="preserve">AV:</text><text x="1872.43" y="363.07" font-size="12.3">垂直</text><rect x="1092.3" y="500.2" width="295.5" height="293.6" rx="3" fill="#fff" stroke="#6e6e6e" stroke-width="2"/><path d="M1147.5 510.6V775.9M1160.5 510.6V775.9M1174.5 510.6V775.9M1187.5 510.6V775.9M1200.5 510.6V775.9M1214.5 510.6V775.9M1227.5 510.6V775.9M1240.5 510.6V775.9M1254.5 510.6V775.9M1267.5 510.6V775.9M1280.5 510.6V775.9M1294.5 510.6V775.9M1307.5 510.6V775.9M1320.5 510.6V775.9M1334.5 510.6V775.9M1347.5 510.6V775.9M1360.5 510.6V775.9M1135.0 544.5H1374.8M1135.0 577.5H1374.8M1135.0 610.5H1374.8M1135.0 643.5H1374.8M1135.0 676.5H1374.8M1135.0 710.5H1374.8M1135.0 743.5H1374.8" stroke="#d4d4d4" stroke-width="1" fill="none"/><path d="M1135.0 510.6H1374.8V775.9" stroke="#787878" stroke-width="1.5" fill="none"/><path d="M1135.0 553.5H1374.8" stroke="#1212a8" stroke-width="1" stroke-dasharray="2.6 1.5" fill="none"/><polyline points="1135.0,683.4 1161.6,685.0 1188.3,683.0 1214.9,684.0 1241.6,685.4 1268.2,684.4 1294.9,684.0 1321.5,683.7 1348.2,682.1 1374.8,684.0" stroke="#1e7a1e" stroke-width="1.1" fill="none"/><path d="M1135.0 509.6V776.9M1134.0 775.9H1375.8" stroke="#000" stroke-width="2" fill="none"/><text x="1130" y="514.57" font-size="11.3" text-anchor="end"  letter-spacing="0.35">70</text><text x="1130" y="779.07" font-size="11.3" text-anchor="end"  letter-spacing="0.35">-10</text><text x="1134.5" y="788.87" font-size="11.3" text-anchor="middle"  letter-spacing="0.35">1</text><text x="1374" y="788.87" font-size="11.3" text-anchor="middle"  letter-spacing="0.35">10</text><g transform="translate(1103.5,643) rotate(-90)"><text x="-41.5" y="4.07" font-size="11.3" text-anchor="start"  textLength="83" lengthAdjust="spacing">Level [dBµV/m]</text></g><text x="1093.80" y="495.92" font-size="12" xml:space="preserve">EUT1, </text><text x="1131.14" y="495.92" font-size="12" textLength="26.7" lengthAdjust="spacingAndGlyphs">モード</text><text x="1157.87" y="495.92" font-size="12" xml:space="preserve">A&#160;&#160;</text><text x="1172.54" y="495.92" font-size="12">垂直</text><path d="M1400 616.5H1436.5" stroke="#1212a8" stroke-width="1" stroke-dasharray="2.6 1.5" fill="none"/><text x="1441.5" y="620.47" font-size="11.3" text-anchor="start"  letter-spacing="0.35">QP</text><path d="M1400 650.5H1436.5" stroke="#1e7a1e" stroke-width="1" fill="none"/><text x="1441.50" y="654.67" font-size="11.3" letter-spacing="0.35" xml:space="preserve">QP:</text><text x="1462.02" y="654.67" font-size="12.3">垂直</text><rect x="1506" y="500.2" width="295.1" height="287.0" rx="3" fill="#fff" stroke="#6e6e6e" stroke-width="2"/><path d="M1581.5 510.5V751.2M1611.5 510.5V751.2M1640.5 510.5V751.2M1669.5 510.5V751.2M1699.5 510.5V751.2M1728.5 510.5V751.2M1758.5 510.5V751.2M1553.1 551.5H1788.5M1553.1 591.5H1788.5M1553.1 631.5H1788.5M1553.1 671.5H1788.5M1553.1 711.5H1788.5" stroke="#d4d4d4" stroke-width="1" fill="none"/><path d="M1549.1 510.5H1788.5V755.2" stroke="#787878" stroke-width="1.5" fill="none"/><path d="M1549.1 510.5H1553.1M1549.1 550.6H1553.1M1549.1 590.7H1553.1M1549.1 630.9H1553.1M1549.1 671.0H1553.1M1549.1 711.1H1553.1M1549.1 751.2H1553.1M1552.7 751.2V755.2M1582.1 751.2V755.2M1611.6 751.2V755.2M1641.0 751.2V755.2M1670.5 751.2V755.2M1699.9 751.2V755.2M1729.3 751.2V755.2M1758.8 751.2V755.2" stroke="#555" stroke-width="1.3" fill="none"/><path d="M1749.5 510.5V751.2" stroke="#2020d0" stroke-width="1" stroke-dasharray="2.6 1.5" fill="none"/><polyline points="1640.5,540.2 1648.2,541.0 1650.1,541.9 1640.5,543.9 1651.0,545.8 1643.0,546.8 1649.6,549.0 1644.8,551.1 1647.5,552.7 1642.4,554.4 1647.4,555.3 1640.6,556.7 1647.1,558.6 1644.7,560.6 1646.9,562.4 1640.9,563.3 1647.4,564.5 1640.9,566.8 1651.1,569.5" stroke="#8b008b" stroke-width="1.1" fill="none"/><path d="M1553.1 509.5V755.2M1549.1 751.2H1789.5" stroke="#000" stroke-width="2" fill="none"/><circle cx="1651.1" cy="569.5" r="5" fill="none" stroke="#8b008b" stroke-width="1.1"/><path d="M1630.9 569.5l5-5 5 5-5 5z" fill="none" stroke="#1e7a1e" stroke-width="1"/><text x="1545.5" y="514.27" font-size="11.3" text-anchor="end"  letter-spacing="0.35">400</text><text x="1545.5" y="554.38" font-size="11.3" text-anchor="end"  letter-spacing="0.35">350</text><text x="1545.5" y="594.5" font-size="11.3" text-anchor="end"  letter-spacing="0.35">300</text><text x="1545.5" y="634.62" font-size="11.3" text-anchor="end"  letter-spacing="0.35">250</text><text x="1545.5" y="674.73" font-size="11.3" text-anchor="end"  letter-spacing="0.35">200</text><text x="1545.5" y="714.85" font-size="11.3" text-anchor="end"  letter-spacing="0.35">150</text><text x="1545.5" y="754.97" font-size="11.3" text-anchor="end"  letter-spacing="0.35">100</text><text x="1550.5" y="767.37" font-size="11.3" text-anchor="middle"  letter-spacing="0.35">-10</text><text x="1581.9375" y="767.37" font-size="11.3" text-anchor="middle"  letter-spacing="0.35">0</text><text x="1611.375" y="767.37" font-size="11.3" text-anchor="middle"  letter-spacing="0.35">10</text><text x="1640.8125" y="767.37" font-size="11.3" text-anchor="middle"  letter-spacing="0.35">20</text><text x="1670.25" y="767.37" font-size="11.3" text-anchor="middle"  letter-spacing="0.35">30</text><text x="1699.6875" y="767.37" font-size="11.3" text-anchor="middle"  letter-spacing="0.35">40</text><text x="1729.125" y="767.37" font-size="11.3" text-anchor="middle"  letter-spacing="0.35">50</text><text x="1758.5625" y="767.37" font-size="11.3" text-anchor="middle"  letter-spacing="0.35">60</text><text x="1788.0" y="767.37" font-size="11.3" text-anchor="middle"  letter-spacing="0.35">70</text><text x="1628.5" y="781.37" font-size="11.3" text-anchor="start"  textLength="83.5" lengthAdjust="spacing">Level [dBµV/m]</text><g transform="translate(1516.5,630) rotate(-90)"><text x="-20.80" y="3.89" font-size="10" textLength="18.2" lengthAdjust="spacingAndGlyphs">高さ</text><text x="-2.60" y="3.89" font-size="10.8" xml:space="preserve"> [cm]</text></g><text x="1506.50" y="495.92" font-size="12" xml:space="preserve">EUT1, </text><text x="1543.84" y="495.92" font-size="12" textLength="26.7" lengthAdjust="spacingAndGlyphs">モード</text><text x="1570.57" y="495.92" font-size="12" xml:space="preserve">A&#160;&#160;</text><text x="1585.24" y="495.92" font-size="12">垂直</text><text x="1506.5" y="799.47" font-size="11.3" text-anchor="start" xml:space="preserve" textLength="217.5" lengthAdjust="spacing">326.5cm  776.96525MHz  23.59dBµV/m</text><path d="M1812.2 582.5H1849.3" stroke="#2020d0" stroke-width="1" stroke-dasharray="2.6 1.5" fill="none"/><text x="1854" y="586.27" font-size="11.3" text-anchor="start"  letter-spacing="0.35">QP</text><path d="M1812.2 616.5H1849.3" stroke="#8b008b" stroke-width="1" fill="none"/><text x="1854.00" y="620.47" font-size="11.3" letter-spacing="0.35" xml:space="preserve">PK:</text><text x="1873.26" y="620.47" font-size="12.3">垂直</text><circle cx="1830.3" cy="650.5" r="5" fill="none" stroke="#8b008b" stroke-width="1.1"/><text x="1854.00" y="654.57" font-size="11.3" letter-spacing="0.35" xml:space="preserve">PK:</text><text x="1873.26" y="654.57" font-size="12.3">垂直</text><path d="M1825.3 667.4l5-5 5 5-5 5z" fill="none" stroke="#1e7a1e" stroke-width="1"/><text x="1854.00" y="671.47" font-size="11.3" letter-spacing="0.35" xml:space="preserve">QP:</text><text x="1874.52" y="671.47" font-size="12.3">垂直</text><path d="M1825.3 680.7h10l-5 9z" fill="none" stroke="#1a1a8c" stroke-width="1.1"/><text x="1854.00" y="689.27" font-size="11.3" letter-spacing="0.35" xml:space="preserve">AV:</text><text x="1872.43" y="689.27" font-size="12.3">垂直</text></svg>
<div class="t" style="left:247.3px;top:820.3px;font-size:13px"><span class="j" id="j47" style="width:2.000em">検波</span>:</div>
<div class="yl" style="left:284.7px;top:808.8px;width:118.0px;height:22px;border-bottom:1px solid #c8c8c8"></div>
<div class="tc" style="left:343.7px;top:820.3px;font-size:13px">PEAK</div>
<div class="t" style="left:416.2px;top:820.3px;font-size:13px"><span class="j" id="j48" style="width:2.000em">偏波</span></div>
<div class="yl" style="left:447.7px;top:808.8px;width:48.3px;height:22px;border-bottom:1px solid #c8c8c8"></div>
<div class="tc" style="left:471.85px;top:820.3px;font-size:13px"><span class="j" id="j49" style="width:2.000em">垂直</span></div>
<div class="t" style="left:509.1px;top:820.3px;font-size:13px"><span class="j" id="j50" style="width:3.000em">周波数</span>:</div>
<div class="yl" style="left:560.2px;top:808.8px;width:147.5px;height:22px;border-bottom:1px solid #c8c8c8"></div>
<div class="tc" style="left:633.95px;top:820.3px;font-size:13px"><span style="letter-spacing:.8px">102.265</span></div>
<div class="t" style="left:712.5px;top:820.3px;font-size:13px;letter-spacing:.6px">MHz</div>
<div class="t" style="left:757.1px;top:820.3px;font-size:13px"><span class="j" id="j32" style="width:2.550em;transform:scaleX(0.85)">レベル</span>:</div>
<div class="yl" style="left:801px;top:808.8px;width:107.7px;height:22px;border-bottom:1px solid #c8c8c8"></div>
<div class="tc" style="left:854.85px;top:820.3px;font-size:13px"><span style="letter-spacing:.8px">0.177</span></div>
<div class="t" style="left:913px;top:820.3px;font-size:13px;letter-spacing:.85px">dBµV/m</div>
<div style="left:1px;top:844px;width:1904px;height:35px;background:#f0f0f0"></div>
<div class="wb" style="left:6.3px;top:848.5px;width:93.2px;height:24.3px;"></div>
<div class="tc" style="left:52.8px;top:861px;font-size:13px"><span class="j" id="j51" style="width:6.000em">数値桁数設定</span></div>
<div style="left:393px;top:848.7px;width:66px;height:23.6px;border:1px solid #dcdcdc;border-radius:4px;background:#f4f4f4"></div>
<div class="tc" style="left:426px;top:861px;font-size:13px;color:#a0a0a0"><span class="j" id="j52" style="width:4.000em">表示更新</span></div>
<div style="left:110.0px;top:854px;width:13px;height:13px;border-radius:50%;background:#0067c0;border:1px solid #0067c0"><div style="left:2.5px;top:2.5px;width:6px;height:6px;border-radius:50%;background:#fff"></div></div>
<div class="t" style="left:128.5px;top:861px;font-size:13px"><span class="j" id="j33" style="width:6.480em;transform:scaleX(0.72)">リストアップデータ</span><span class="j" id="j53" style="width:2.000em">表示</span></div>
<div style="left:260.3px;top:854px;width:13px;height:13px;border-radius:50%;background:#f6f6f6;border:1px solid #6c6c6c"></div>
<div class="t" style="left:278.8px;top:861px;font-size:13px"><span class="j" id="j34" style="width:5.040em;transform:scaleX(0.72)">チャートデータ</span><span class="j" id="j54" style="width:2.000em">表示</span></div>
<div style="left:470.2px;top:854px;width:13px;height:13px;border-radius:50%;background:#f6f6f6;border:1px solid #6c6c6c"></div>
<div class="t" style="left:488.7px;top:861px;font-size:13px"><span class="j" id="j55" style="width:3.000em">最悪値</span><span class="j" id="j35" style="width:2.160em;transform:scaleX(0.72)">データ</span><span class="j" id="j56" style="width:2.000em">表示</span></div>
<div style="left:604.1px;top:854px;width:13px;height:13px;border-radius:50%;background:#f6f6f6;border:1px solid #6c6c6c"></div>
<div class="t" style="left:622.6px;top:861px;font-size:13px"><span class="j" id="j57" style="width:3.000em">最悪値</span><span class="j" id="j36" style="width:2.160em;transform:scaleX(0.72)">データ</span><span class="j" id="j58" style="width:2.000em">表示</span><span style="font-size:13px;letter-spacing:0.6px">(MIX)</span></div>
<div style="left:1px;top:876.8px;width:1904px;height:194.2px;background:#ababab;border-top:2px solid #646464;border-left:2px solid #646464;border-right:2px solid #fff;border-bottom:2px solid #fff"></div>
<div class="hc" style="left:2.6px;top:879.7px;width:43.7px;height:69.0px;"></div>
<div class="tc" style="left:24.4px;top:914.5px;font-size:12px">No.</div>
<div class="hc" style="left:46.3px;top:879.7px;width:51.0px;height:69.0px;"></div>
<div class="tc" style="left:71.8px;top:906.7px;font-size:12px"><span class="j" id="j59" style="width:2.000em">測定</span></div>
<div class="tc" style="left:71.8px;top:922.3px;font-size:12px"><span class="j" id="j37" style="width:2.160em;transform:scaleX(0.72)">レンジ</span></div>
<div class="hc" style="left:97.3px;top:879.7px;width:47.0px;height:69.0px;"></div>
<div class="tc" style="left:120.8px;top:914.5px;font-size:12px"><span class="j" id="j60" style="width:2.000em">偏波</span></div>
<div class="hc" style="left:144.3px;top:879.7px;width:593.0px;height:23.0px;"></div>
<div class="tc" style="left:440.8px;top:891.5px;font-size:12px">PEAK</div>
<div class="hc" style="left:737.3px;top:879.7px;width:593.0px;height:23.0px;"></div>
<div class="tc" style="left:1033.8px;top:891.5px;font-size:12px">QP</div>
<div class="hc" style="left:144.3px;top:902.7px;width:74.0px;height:23.0px;"></div>
<div class="tc" style="left:181.3px;top:914.5px;font-size:12px"><span class="j" id="j61" style="width:3.000em">周波数</span></div>
<div class="hc" style="left:144.3px;top:925.7px;width:74.0px;height:23.0px;"></div>
<div class="tc" style="left:181.3px;top:937.5px;font-size:12px">MHz</div>
<div class="hc" style="left:218.3px;top:902.7px;width:54.0px;height:23.0px;"></div>
<div class="tc" style="left:245.3px;top:914.5px;font-size:12px"><span class="j" id="j38" style="width:2.160em;transform:scaleX(0.72)">レベル</span></div>
<div class="hc" style="left:218.3px;top:925.7px;width:54.0px;height:23.0px;"></div>
<div class="tc" style="left:245.3px;top:937.5px;font-size:12px">dBµV</div>
<div class="hc" style="left:272.3px;top:902.7px;width:52.0px;height:23.0px;"></div>
<div class="tc" style="left:298.3px;top:914.5px;font-size:12px">TRD.</div>
<div class="hc" style="left:272.3px;top:925.7px;width:52.0px;height:23.0px;"></div>
<div class="tc" style="left:298.3px;top:937.5px;font-size:12px">dB</div>
<div class="hc" style="left:324.3px;top:902.7px;width:46.0px;height:23.0px;"></div>
<div class="tc" style="left:347.3px;top:914.5px;font-size:12px">CBL</div>
<div class="hc" style="left:324.3px;top:925.7px;width:46.0px;height:23.0px;"></div>
<div class="tc" style="left:347.3px;top:937.5px;font-size:12px">dB</div>
<div class="hc" style="left:370.3px;top:902.7px;width:51.0px;height:23.0px;"></div>
<div class="tc" style="left:395.8px;top:914.5px;font-size:12px">Gain</div>
<div class="hc" style="left:370.3px;top:925.7px;width:51.0px;height:23.0px;"></div>
<div class="tc" style="left:395.8px;top:937.5px;font-size:12px">dB</div>
<div class="hc" style="left:421.3px;top:902.7px;width:66.0px;height:23.0px;"></div>
<div class="tc" style="left:454.3px;top:914.5px;font-size:12px"><span class="j" id="j39" style="width:2.880em;transform:scaleX(0.72)">ファクタ</span><span class="j" id="j62" style="width:1.000em">計</span></div>
<div class="hc" style="left:421.3px;top:925.7px;width:66.0px;height:23.0px;"></div>
<div class="tc" style="left:454.3px;top:937.5px;font-size:12px">dB</div>
<div class="hc" style="left:487.3px;top:902.7px;width:71.0px;height:23.0px;"></div>
<div class="tc" style="left:522.8px;top:914.5px;font-size:12px"><span class="j" id="j63" style="width:4.000em">測定結果</span></div>
<div class="hc" style="left:487.3px;top:925.7px;width:71.0px;height:23.0px;"></div>
<div class="tc" style="left:522.8px;top:937.5px;font-size:12px">dBµV/m</div>
<div class="hc" style="left:558.3px;top:902.7px;width:71.0px;height:23.0px;"></div>
<div class="tc" style="left:593.8px;top:914.5px;font-size:12px"><span class="j" id="j40" style="width:2.880em;transform:scaleX(0.72)">リミット</span></div>
<div class="hc" style="left:558.3px;top:925.7px;width:71.0px;height:23.0px;"></div>
<div class="tc" style="left:593.8px;top:937.5px;font-size:12px">dBµV/m</div>
<div class="hc" style="left:629.3px;top:902.7px;width:61.0px;height:23.0px;"></div>
<div class="tc" style="left:659.8px;top:914.5px;font-size:12px"><span class="j" id="j41" style="width:2.880em;transform:scaleX(0.72)">マージン</span></div>
<div class="hc" style="left:629.3px;top:925.7px;width:61.0px;height:23.0px;"></div>
<div class="tc" style="left:659.8px;top:937.5px;font-size:12px">dB</div>
<div class="hc" style="left:690.3px;top:902.7px;width:47.0px;height:46.0px;"></div>
<div class="tc" style="left:713.8px;top:926.0px;font-size:12px"><span class="j" id="j64" style="width:2.000em">判定</span></div>
<div class="hc" style="left:737.3px;top:902.7px;width:74.0px;height:23.0px;"></div>
<div class="tc" style="left:774.3px;top:914.5px;font-size:12px"><span class="j" id="j65" style="width:3.000em">周波数</span></div>
<div class="hc" style="left:737.3px;top:925.7px;width:74.0px;height:23.0px;"></div>
<div class="tc" style="left:774.3px;top:937.5px;font-size:12px">MHz</div>
<div class="hc" style="left:811.3px;top:902.7px;width:54.0px;height:23.0px;"></div>
<div class="tc" style="left:838.3px;top:914.5px;font-size:12px"><span class="j" id="j42" style="width:2.160em;transform:scaleX(0.72)">レベル</span></div>
<div class="hc" style="left:811.3px;top:925.7px;width:54.0px;height:23.0px;"></div>
<div class="tc" style="left:838.3px;top:937.5px;font-size:12px">dBµV</div>
<div class="hc" style="left:865.3px;top:902.7px;width:52.0px;height:23.0px;"></div>
<div class="tc" style="left:891.3px;top:914.5px;font-size:12px">TRD.</div>
<div class="hc" style="left:865.3px;top:925.7px;width:52.0px;height:23.0px;"></div>
<div class="tc" style="left:891.3px;top:937.5px;font-size:12px">dB</div>
<div class="hc" style="left:917.3px;top:902.7px;width:46.0px;height:23.0px;"></div>
<div class="tc" style="left:940.3px;top:914.5px;font-size:12px">CBL</div>
<div class="hc" style="left:917.3px;top:925.7px;width:46.0px;height:23.0px;"></div>
<div class="tc" style="left:940.3px;top:937.5px;font-size:12px">dB</div>
<div class="hc" style="left:963.3px;top:902.7px;width:51.0px;height:23.0px;"></div>
<div class="tc" style="left:988.8px;top:914.5px;font-size:12px">Gain</div>
<div class="hc" style="left:963.3px;top:925.7px;width:51.0px;height:23.0px;"></div>
<div class="tc" style="left:988.8px;top:937.5px;font-size:12px">dB</div>
<div class="hc" style="left:1014.3px;top:902.7px;width:66.0px;height:23.0px;"></div>
<div class="tc" style="left:1047.3px;top:914.5px;font-size:12px"><span class="j" id="j43" style="width:2.880em;transform:scaleX(0.72)">ファクタ</span><span class="j" id="j66" style="width:1.000em">計</span></div>
<div class="hc" style="left:1014.3px;top:925.7px;width:66.0px;height:23.0px;"></div>
<div class="tc" style="left:1047.3px;top:937.5px;font-size:12px">dB</div>
<div class="hc" style="left:1080.3px;top:902.7px;width:71.0px;height:23.0px;"></div>
<div class="tc" style="left:1115.8px;top:914.5px;font-size:12px"><span class="j" id="j67" style="width:4.000em">測定結果</span></div>
<div class="hc" style="left:1080.3px;top:925.7px;width:71.0px;height:23.0px;"></div>
<div class="tc" style="left:1115.8px;top:937.5px;font-size:12px">dBµV/m</div>
<div class="hc" style="left:1151.3px;top:902.7px;width:71.0px;height:23.0px;"></div>
<div class="tc" style="left:1186.8px;top:914.5px;font-size:12px"><span class="j" id="j44" style="width:2.880em;transform:scaleX(0.72)">リミット</span></div>
<div class="hc" style="left:1151.3px;top:925.7px;width:71.0px;height:23.0px;"></div>
<div class="tc" style="left:1186.8px;top:937.5px;font-size:12px">dBµV/m</div>
<div class="hc" style="left:1222.3px;top:902.7px;width:61.0px;height:23.0px;"></div>
<div class="tc" style="left:1252.8px;top:914.5px;font-size:12px"><span class="j" id="j45" style="width:2.880em;transform:scaleX(0.72)">マージン</span></div>
<div class="hc" style="left:1222.3px;top:925.7px;width:61.0px;height:23.0px;"></div>
<div class="tc" style="left:1252.8px;top:937.5px;font-size:12px">dB</div>
<div class="hc" style="left:1283.3px;top:902.7px;width:47.0px;height:46.0px;"></div>
<div class="tc" style="left:1306.8px;top:926.0px;font-size:12px"><span class="j" id="j68" style="width:2.000em">判定</span></div>
<div class="hc" style="left:1330.3px;top:879.7px;width:46.0px;height:46.0px;"></div>
<div class="tc" style="left:1353.3px;top:903.0px;font-size:12px"><span class="j" id="j69" style="width:1.820em;transform:scaleX(0.91)">高さ</span></div>
<div class="hc" style="left:1330.3px;top:925.7px;width:46.0px;height:23.0px;"></div>
<div class="tc" style="left:1353.3px;top:937.5px;font-size:12px">cm</div>
<div class="hc" style="left:1376.3px;top:879.7px;width:46.0px;height:46.0px;"></div>
<div class="tc" style="left:1399.3px;top:903.0px;font-size:12px"><span class="j" id="j70" style="width:2.000em">角度</span></div>
<div class="hc" style="left:1376.3px;top:925.7px;width:46.0px;height:23.0px;"></div>
<div class="tc" style="left:1399.3px;top:937.5px;font-size:12px">deg</div>
<div class="hc" style="left:1422.3px;top:879.7px;width:47.0px;height:69.0px;"></div>
<div class="tc" style="left:1445.8px;top:906.7px;font-size:12px"><span class="j" id="j71" style="width:2.000em">総合</span></div>
<div class="tc" style="left:1445.8px;top:922.3px;font-size:12px"><span class="j" id="j72" style="width:2.000em">判定</span></div>
<div class="hc" style="left:1469.3px;top:879.7px;width:56.0px;height:69.0px;"></div>
<div class="tc" style="left:1497.3px;top:914.5px;font-size:12px"><span class="j" id="j46" style="width:2.880em;transform:scaleX(0.72)">コメント</span></div>
<div style="left:2.6px;top:948.7px;width:1523.7px;height:22.7px;background:#0078d7"></div>
<div style="left:45.3px;top:948.7px;width:1px;height:22.7px;background:#cfe4f7"></div>
<div class="tc" style="left:24.4px;top:960.2px;color:#fff;font-size:12.5px">1</div>
<div style="left:96.3px;top:948.7px;width:1px;height:22.7px;background:#cfe4f7"></div>
<div class="tc" style="left:71.8px;top:960.2px;color:#fff;font-size:12.5px">1</div>
<div style="left:143.3px;top:948.7px;width:1px;height:22.7px;background:#cfe4f7"></div>
<div class="tc" style="left:120.8px;top:960.2px;color:#fff;font-size:12.5px"><span class="j" id="j73" style="width:2.000em">垂直</span></div>
<div style="left:217.3px;top:948.7px;width:1px;height:22.7px;background:#cfe4f7"></div>
<div class="tc" style="left:181.3px;top:960.2px;color:#fff;font-size:12.5px">776.96525</div>
<div style="left:271.3px;top:948.7px;width:1px;height:22.7px;background:#cfe4f7"></div>
<div class="tc" style="left:245.3px;top:960.2px;color:#fff;font-size:12.5px">28.24</div>
<div style="left:323.3px;top:948.7px;width:1px;height:22.7px;background:#cfe4f7"></div>
<div class="tc" style="left:298.3px;top:960.2px;color:#fff;font-size:12.5px">22.17</div>
<div style="left:369.3px;top:948.7px;width:1px;height:22.7px;background:#cfe4f7"></div>
<div class="tc" style="left:347.3px;top:960.2px;color:#fff;font-size:12.5px">4.56</div>
<div style="left:420.3px;top:948.7px;width:1px;height:22.7px;background:#cfe4f7"></div>
<div class="tc" style="left:395.8px;top:960.2px;color:#fff;font-size:12.5px">-31.37</div>
<div style="left:486.3px;top:948.7px;width:1px;height:22.7px;background:#cfe4f7"></div>
<div class="tc" style="left:454.3px;top:960.2px;color:#fff;font-size:12.5px">-4.65</div>
<div style="left:557.3px;top:948.7px;width:1px;height:22.7px;background:#cfe4f7"></div>
<div class="tc" style="left:522.8px;top:960.2px;color:#fff;font-size:12.5px">23.59</div>
<div style="left:628.3px;top:948.7px;width:1px;height:22.7px;background:#cfe4f7"></div>
<div class="tc" style="left:593.8px;top:960.2px;color:#fff;font-size:12.5px"><span style="letter-spacing:2.6px;margin-right:-2.6px">---</span></div>
<div style="left:689.3px;top:948.7px;width:1px;height:22.7px;background:#cfe4f7"></div>
<div class="tc" style="left:659.8px;top:960.2px;color:#fff;font-size:12.5px"><span style="letter-spacing:2.6px;margin-right:-2.6px">---</span></div>
<div style="left:736.3px;top:948.7px;width:1px;height:22.7px;background:#cfe4f7"></div>
<div class="tc" style="left:713.8px;top:960.2px;color:#fff;font-size:12.5px"><span style="letter-spacing:2.6px;margin-right:-2.6px">---</span></div>
<div style="left:810.3px;top:948.7px;width:1px;height:22.7px;background:#cfe4f7"></div>
<div class="tc" style="left:774.3px;top:960.2px;color:#fff;font-size:12.5px">776.96525</div>
<div style="left:864.3px;top:948.7px;width:1px;height:22.7px;background:#cfe4f7"></div>
<div class="tc" style="left:838.3px;top:960.2px;color:#fff;font-size:12.5px">23.09</div>
<div style="left:916.3px;top:948.7px;width:1px;height:22.7px;background:#cfe4f7"></div>
<div class="tc" style="left:891.3px;top:960.2px;color:#fff;font-size:12.5px">22.17</div>
<div style="left:962.3px;top:948.7px;width:1px;height:22.7px;background:#cfe4f7"></div>
<div class="tc" style="left:940.3px;top:960.2px;color:#fff;font-size:12.5px">4.56</div>
<div style="left:1013.3px;top:948.7px;width:1px;height:22.7px;background:#cfe4f7"></div>
<div class="tc" style="left:988.8px;top:960.2px;color:#fff;font-size:12.5px">-31.37</div>
<div style="left:1079.3px;top:948.7px;width:1px;height:22.7px;background:#cfe4f7"></div>
<div class="tc" style="left:1047.3px;top:960.2px;color:#fff;font-size:12.5px">-4.65</div>
<div style="left:1150.3px;top:948.7px;width:1px;height:22.7px;background:#cfe4f7"></div>
<div class="tc" style="left:1115.8px;top:960.2px;color:#fff;font-size:12.5px">18.44</div>
<div style="left:1221.3px;top:948.7px;width:1px;height:22.7px;background:#cfe4f7"></div>
<div class="tc" style="left:1186.8px;top:960.2px;color:#fff;font-size:12.5px">57</div>
<div style="left:1282.3px;top:948.7px;width:1px;height:22.7px;background:#cfe4f7"></div>
<div class="tc" style="left:1252.8px;top:960.2px;color:#fff;font-size:12.5px">38.56</div>
<div style="left:1329.3px;top:948.7px;width:1px;height:22.7px;background:#cfe4f7"></div>
<div class="tc" style="left:1306.8px;top:959.2px;color:#fff;font-size:23px">○</div>
<div style="left:1375.3px;top:948.7px;width:1px;height:22.7px;background:#cfe4f7"></div>
<div class="tc" style="left:1353.3px;top:960.2px;color:#fff;font-size:12.5px">326.5</div>
<div style="left:1421.3px;top:948.7px;width:1px;height:22.7px;background:#cfe4f7"></div>
<div class="tc" style="left:1399.3px;top:960.2px;color:#fff;font-size:12.5px">254.4</div>
<div style="left:1468.3px;top:948.7px;width:1px;height:22.7px;background:#cfe4f7"></div>
<div class="tc" style="left:1445.8px;top:959.2px;color:#fff;font-size:23px">○</div>
<div style="left:1524.3px;top:948.7px;width:1px;height:22.7px;background:#cfe4f7"></div>
<div style="left:2.6px;top:948.7px;width:1px;height:22.7px;background:#cfe4f7"></div>
<div style="left:2.6px;top:971.2px;width:1523.7px;height:1px;background:#b5d6f1"></div>
</div><div style="position:absolute;left:1905px;top:9px;width:1px;height:1064px;background:#c2c2c2"></div><div style="position:absolute;left:209px;top:1072px;width:1697px;height:1px;background:#c2c2c2"></div></body></html>
